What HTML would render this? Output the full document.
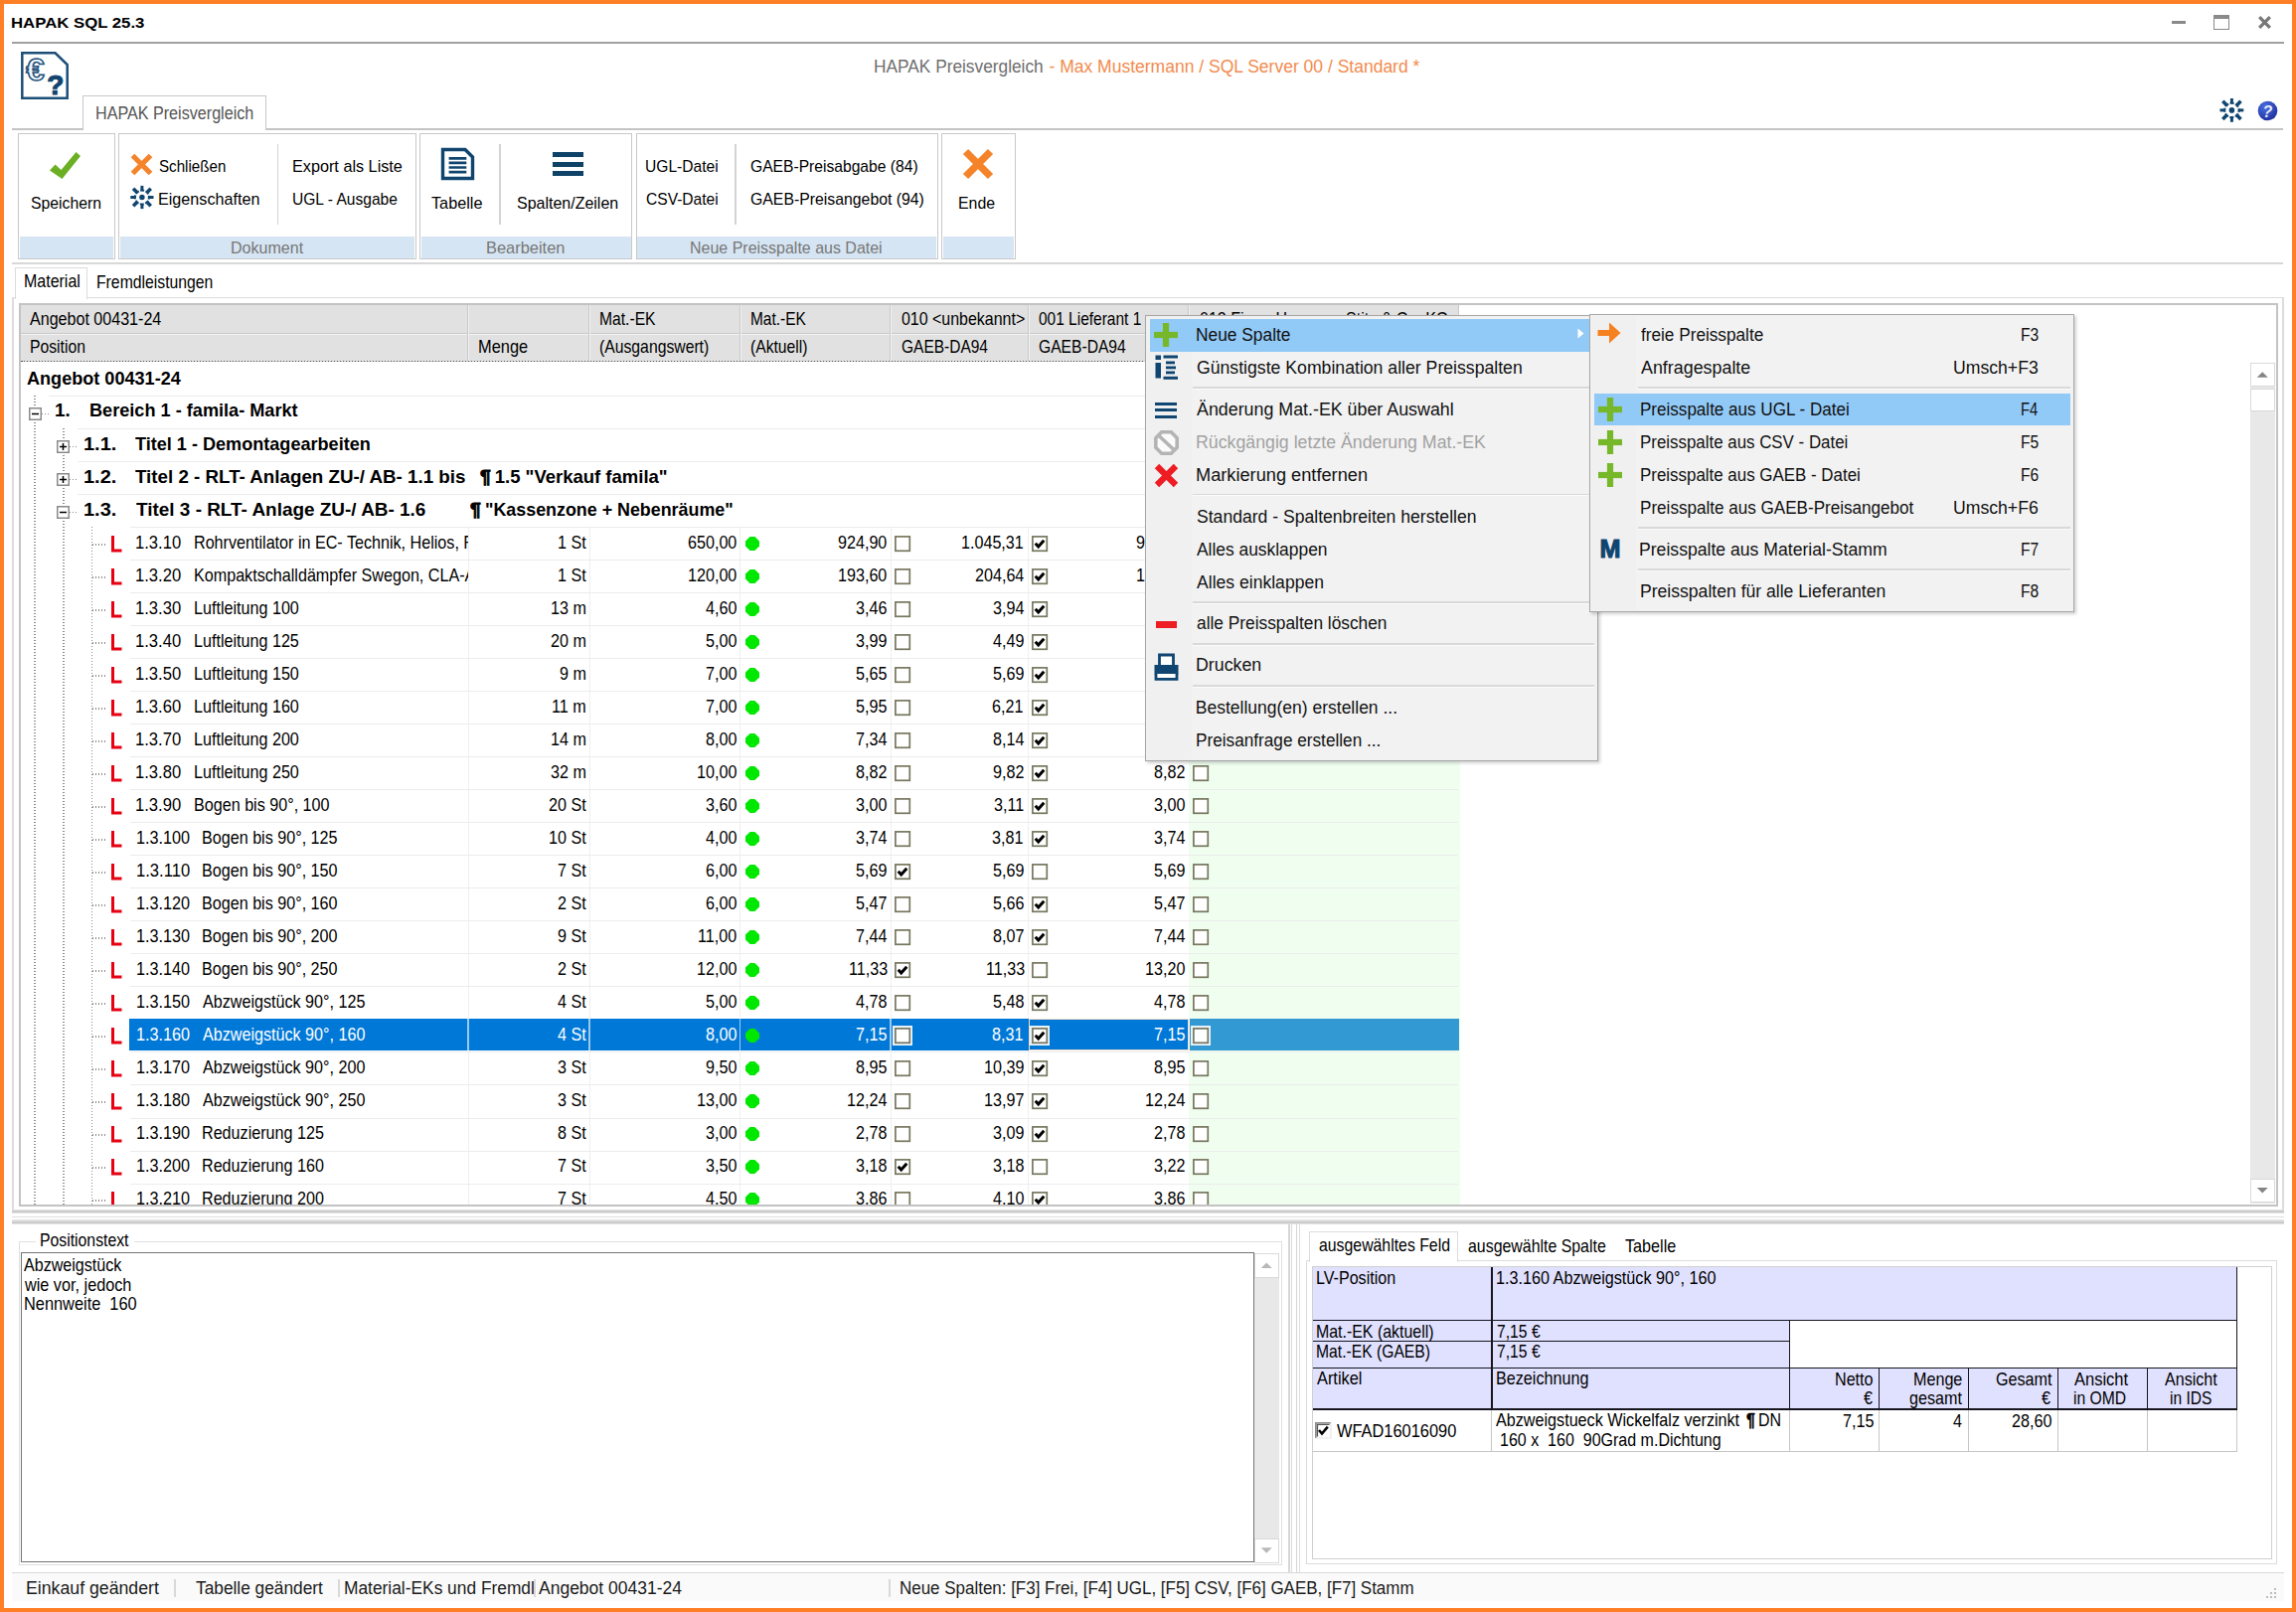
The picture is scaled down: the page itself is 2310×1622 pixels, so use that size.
<!DOCTYPE html>
<html lang="de"><head><meta charset="utf-8"><title>HAPAK SQL 25.3</title><style>
html,body{margin:0;padding:0;background:#fff;}
body{width:2310px;height:1622px;overflow:hidden;}
#app{position:relative;width:2310px;height:1622px;overflow:hidden;background:#ff7f27;font-family:"Liberation Sans",sans-serif;color:#000;}
#app div,#app span,#app svg{position:absolute;box-sizing:border-box;}
#app span{white-space:pre;transform-origin:0 0;}
#app svg{overflow:visible;}
#app svg text{font-family:"Liberation Sans",sans-serif;}
</style></head><body><div id="app">
<div style="left:4px;top:4px;width:2301.5px;height:1613.5px;background:#fff;"></div>
<span style="left:10.91px;top:15px;font-size:15.4px;line-height:15.4px;font-weight:bold;transform:scaleX(1.0887);">HAPAK SQL 25.3</span>
<div style="left:12px;top:41.5px;width:2285.5px;height:2px;background:#a0a0a0;"></div>
<div style="left:2185px;top:20.5px;width:14px;height:3.5px;background:#8a8a8a;"></div>
<div style="left:2227px;top:15px;width:16px;height:15px;background:#fff;border:1.6px solid #8a8a8a;border-top:4px solid #8a8a8a;"></div>
<svg style="left:2272px;top:16px;" width="13" height="13" viewBox="0 0 13 13"><path d="M1.2 1.2 L11.8 11.8 M11.8 1.2 L1.2 11.8" stroke="#777" stroke-width="3.2" fill="none"/></svg>
<svg style="left:20px;top:51px;" width="50" height="50" viewBox="0 0 50 50"><path d="M2.3 2.3 H35.5 L47.7 14 V47.7 H2.3 Z" fill="#fff" stroke="#1d4e78" stroke-width="2.5" stroke-linejoin="miter"/><text x="6.2" y="29.8" font-size="31" font-weight="bold" fill="#f1f8ff" stroke="#1d4e78" stroke-width="1.5" textLength="18.5" lengthAdjust="spacingAndGlyphs">€</text><text x="27.2" y="43.6" font-size="28" font-weight="bold" fill="#12446f" stroke="#12446f" stroke-width="1.1">?</text></svg>
<span style="left:879.01px;top:59px;font-size:17.5px;line-height:17.5px;color:#6e6e6e;transform:scaleX(0.9879);">HAPAK Preisvergleich</span>
<span style="left:1055.50px;top:59px;font-size:17.5px;line-height:17.5px;color:#f28b4e;">- Max Mustermann / SQL Server 00 / Standard *</span>
<div style="left:12px;top:129px;width:2285px;height:1.5px;background:#c4c4c4;"></div>
<div style="left:83px;top:96px;width:184.5px;height:35px;background:#fff;border:1.5px solid #c8c8c8;border-bottom:none;"></div>
<span style="left:95.60px;top:105px;font-size:18px;line-height:18px;color:#555;transform:scaleX(0.8963);">HAPAK Preisvergleich</span>
<svg style="left:2232px;top:98px;" width="26" height="26" viewBox="0 0 26 26"><circle cx="13.4" cy="12.9" r="2.80" fill="#0f4570"/><circle cx="13.4" cy="12.9" r="7.14" fill="none" stroke="#0f4570" stroke-width="2.02" stroke-dasharray="4.04 1.57" stroke-dashoffset="2.02"/><path d="M20.78 12.90 L25.30 12.90" stroke="#0f4570" stroke-width="3.00" fill="none"/><path d="M18.62 18.12 L22.49 21.99" stroke="#0f4570" stroke-width="3.54" fill="none"/><path d="M13.40 20.28 L13.40 24.80" stroke="#0f4570" stroke-width="3.00" fill="none"/><path d="M8.18 18.12 L4.31 21.99" stroke="#0f4570" stroke-width="3.54" fill="none"/><path d="M6.02 12.90 L1.50 12.90" stroke="#0f4570" stroke-width="3.00" fill="none"/><path d="M8.18 7.68 L4.31 3.81" stroke="#0f4570" stroke-width="3.54" fill="none"/><path d="M13.40 5.52 L13.40 1.00" stroke="#0f4570" stroke-width="3.00" fill="none"/><path d="M18.62 7.68 L22.49 3.81" stroke="#0f4570" stroke-width="3.54" fill="none"/></svg>
<svg style="left:2271px;top:100.5px;" width="21" height="21" viewBox="0 0 21 21"><defs><radialGradient id="hg" cx="0.38" cy="0.3" r="0.75"><stop offset="0" stop-color="#4a6fe0"/><stop offset="1" stop-color="#1d2f9e"/></radialGradient></defs><circle cx="10.5" cy="10.5" r="9.8" fill="url(#hg)"/><text x="10.5" y="16.5" font-size="16" font-weight="bold" font-style="italic" text-anchor="middle" fill="#e8ecf8">?</text></svg>
<div style="left:18px;top:134px;width:97.5px;height:127px;background:#fff;border:1.5px solid #c9c9c9;"></div>
<div style="left:19.5px;top:237.5px;width:94.5px;height:22px;background:#d6e5f3;"></div>
<div style="left:119px;top:134px;width:299.5px;height:127px;background:#fff;border:1.5px solid #c9c9c9;"></div>
<div style="left:120.5px;top:237.5px;width:296.5px;height:22px;background:#d6e5f3;"></div>
<span style="left:232.06px;top:241px;font-size:17px;line-height:17px;color:#777;transform:scaleX(0.9445);">Dokument</span>
<div style="left:422px;top:134px;width:214px;height:127px;background:#fff;border:1.5px solid #c9c9c9;"></div>
<div style="left:423.5px;top:237.5px;width:211px;height:22px;background:#d6e5f3;"></div>
<span style="left:488.53px;top:241px;font-size:17px;line-height:17px;color:#777;transform:scaleX(0.9657);">Bearbeiten</span>
<div style="left:639.5px;top:134px;width:304px;height:127px;background:#fff;border:1.5px solid #c9c9c9;"></div>
<div style="left:641px;top:237.5px;width:301px;height:22px;background:#d6e5f3;"></div>
<span style="left:694.06px;top:241px;font-size:17px;line-height:17px;color:#777;transform:scaleX(0.9401);">Neue Preisspalte aus Datei</span>
<div style="left:947px;top:134px;width:74.5px;height:127px;background:#fff;border:1.5px solid #c9c9c9;"></div>
<div style="left:948.5px;top:237.5px;width:71.5px;height:22px;background:#d6e5f3;"></div>
<div style="left:278.75px;top:144.5px;width:1.5px;height:81.5px;background:#d4d4d4;"></div>
<div style="left:502.25px;top:144.5px;width:1.5px;height:81.5px;background:#d4d4d4;"></div>
<div style="left:739.25px;top:144.5px;width:1.5px;height:81.5px;background:#d4d4d4;"></div>
<svg style="left:49px;top:152px;" width="33" height="29" viewBox="0 0 33 29"><path d="M1 19.5 L6.5 13.5 L12.5 19 L27.5 1 L32 5 L13.5 28 Z" fill="#6bb024"/></svg>
<span style="left:30.50px;top:196px;font-size:17px;line-height:17px;transform:scaleX(0.9265);">Speichern</span>
<svg style="left:131px;top:153.5px;" width="23" height="23" viewBox="0 0 23 23"><path d="M2.5 2.5 L20.5 20.5 M20.5 2.5 L2.5 20.5" stroke="#f5832a" stroke-width="5.2" fill="none"/></svg>
<span style="left:160.00px;top:159px;font-size:17px;line-height:17px;transform:scaleX(0.8917);">Schließen</span>
<svg style="left:129.5px;top:185.5px;" width="25" height="25" viewBox="0 0 25 25"><circle cx="12.9" cy="12.5" r="2.73" fill="#0f4570"/><circle cx="12.9" cy="12.5" r="6.96" fill="none" stroke="#0f4570" stroke-width="1.97" stroke-dasharray="3.94 1.53" stroke-dashoffset="1.97"/><path d="M20.09 12.50 L24.50 12.50" stroke="#0f4570" stroke-width="3.00" fill="none"/><path d="M17.99 17.59 L21.76 21.36" stroke="#0f4570" stroke-width="3.54" fill="none"/><path d="M12.90 19.69 L12.90 24.10" stroke="#0f4570" stroke-width="3.00" fill="none"/><path d="M7.81 17.59 L4.04 21.36" stroke="#0f4570" stroke-width="3.54" fill="none"/><path d="M5.71 12.50 L1.30 12.50" stroke="#0f4570" stroke-width="3.00" fill="none"/><path d="M7.81 7.41 L4.04 3.64" stroke="#0f4570" stroke-width="3.54" fill="none"/><path d="M12.90 5.31 L12.90 0.90" stroke="#0f4570" stroke-width="3.00" fill="none"/><path d="M17.99 7.41 L21.76 3.64" stroke="#0f4570" stroke-width="3.54" fill="none"/></svg>
<span style="left:159.05px;top:192px;font-size:17px;line-height:17px;transform:scaleX(0.9502);">Eigenschaften</span>
<span style="left:293.55px;top:159px;font-size:17px;line-height:17px;transform:scaleX(0.9541);">Export als Liste</span>
<span style="left:293.58px;top:192px;font-size:17px;line-height:17px;transform:scaleX(0.9160);">UGL - Ausgabe</span>
<svg style="left:443px;top:148px;" width="35" height="34" viewBox="0 0 35 34"><path d="M2.5 2.5 H25 L32.5 10 V31.5 H2.5 Z" fill="#fff" stroke="#10456f" stroke-width="3.4"/><path d="M8.6 11.3 H26.3 M8.6 15.9 H26.3 M8.6 20.5 H26.3 M8.6 25.1 H26.3" stroke="#10456f" stroke-width="2.7"/></svg>
<span style="left:434.00px;top:196px;font-size:17px;line-height:17px;transform:scaleX(0.9547);">Tabelle</span>
<div style="left:556px;top:153px;width:31px;height:5px;background:#0e4267;"></div>
<div style="left:556px;top:162.5px;width:31px;height:5px;background:#0e4267;"></div>
<div style="left:556px;top:171.8px;width:31px;height:5px;background:#0e4267;"></div>
<span style="left:520.00px;top:196px;font-size:17px;line-height:17px;transform:scaleX(0.9401);">Spalten/Zeilen</span>
<span style="left:649.08px;top:159px;font-size:17px;line-height:17px;transform:scaleX(0.9169);">UGL-Datei</span>
<span style="left:650.00px;top:192px;font-size:17px;line-height:17px;transform:scaleX(0.9162);">CSV-Datei</span>
<span style="left:755.00px;top:159px;font-size:17px;line-height:17px;transform:scaleX(0.9198);">GAEB-Preisabgabe (84)</span>
<span style="left:755.00px;top:192px;font-size:17px;line-height:17px;transform:scaleX(0.9299);">GAEB-Preisangebot (94)</span>
<svg style="left:968px;top:149px;" width="32" height="32" viewBox="0 0 32 32"><path d="M3.5 3.5 L28.5 28.5 M28.5 3.5 L3.5 28.5" stroke="#f5832a" stroke-width="7.4" fill="none"/></svg>
<span style="left:964.07px;top:196px;font-size:17px;line-height:17px;transform:scaleX(0.9347);">Ende</span>
<div style="left:12px;top:264px;width:2285px;height:1.5px;background:#d8d8d8;"></div>
<div style="left:12px;top:298.5px;width:2285px;height:1.5px;background:#dcdcdc;"></div>
<div style="left:12px;top:298.5px;width:1.5px;height:919.5px;background:#dcdcdc;"></div>
<div style="left:2296px;top:298.5px;width:1.5px;height:919.5px;background:#dcdcdc;"></div>
<div style="left:15px;top:269px;width:73px;height:31.5px;background:#fff;border:1.5px solid #dcdcdc;border-bottom:none;"></div>
<span style="left:24.14px;top:274px;font-size:18.5px;line-height:18.5px;transform:scaleX(0.8636);">Material</span>
<span style="left:96.65px;top:275px;font-size:18.5px;line-height:18.5px;transform:scaleX(0.8516);">Fremdleistungen</span>
<div style="left:19px;top:305px;width:2272.5px;height:908.5px;background:#fff;border:2px solid #c3c3c3;"></div>
<div style="left:21px;top:307px;width:1446.5px;height:56.5px;background:#e1e1e1;"></div>
<div style="left:21px;top:334.5px;width:1446.5px;height:1px;background:#c9c9c9;"></div>
<div style="left:21px;top:335.5px;width:1446.5px;height:1px;background:#f4f4f4;"></div>
<div style="left:470px;top:307px;width:1px;height:56.5px;background:#c9c9c9;"></div>
<div style="left:471px;top:307px;width:1px;height:56.5px;background:#f1f1f1;"></div>
<div style="left:592px;top:307px;width:1px;height:56.5px;background:#c9c9c9;"></div>
<div style="left:593px;top:307px;width:1px;height:56.5px;background:#f1f1f1;"></div>
<div style="left:743.5px;top:307px;width:1px;height:56.5px;background:#c9c9c9;"></div>
<div style="left:744.5px;top:307px;width:1px;height:56.5px;background:#f1f1f1;"></div>
<div style="left:895px;top:307px;width:1px;height:56.5px;background:#c9c9c9;"></div>
<div style="left:896px;top:307px;width:1px;height:56.5px;background:#f1f1f1;"></div>
<div style="left:1033.5px;top:307px;width:1px;height:56.5px;background:#c9c9c9;"></div>
<div style="left:1034.5px;top:307px;width:1px;height:56.5px;background:#f1f1f1;"></div>
<div style="left:1195px;top:307px;width:1px;height:56.5px;background:#c9c9c9;"></div>
<div style="left:1196px;top:307px;width:1px;height:56.5px;background:#f1f1f1;"></div>
<div style="left:1466.5px;top:307px;width:1px;height:56.5px;background:#c9c9c9;"></div>
<div style="left:21px;top:363px;width:1446.5px;height:1.2px;background:repeating-linear-gradient(90deg,#555 0 1.5px,#cfcfcf 1.5px 3px);"></div>
<span style="left:30.00px;top:312px;font-size:18.5px;line-height:18.5px;transform:scaleX(0.8687);">Angebot 00431-24</span>
<span style="left:30.15px;top:340px;font-size:18.5px;line-height:18.5px;transform:scaleX(0.8493);">Position</span>
<span style="left:481.11px;top:340px;font-size:18.5px;line-height:18.5px;transform:scaleX(0.8864);">Menge</span>
<span style="left:602.90px;top:312px;font-size:18.5px;line-height:18.5px;transform:scaleX(0.8461);">Mat.-EK</span>
<span style="left:602.90px;top:340px;font-size:18.5px;line-height:18.5px;transform:scaleX(0.8509);">(Ausgangswert)</span>
<span style="left:754.67px;top:312px;font-size:18.5px;line-height:18.5px;transform:scaleX(0.8348);">Mat.-EK</span>
<span style="left:754.65px;top:340px;font-size:18.5px;line-height:18.5px;transform:scaleX(0.8472);">(Aktuell)</span>
<span style="left:907.00px;top:312px;font-size:18.5px;line-height:18.5px;transform:scaleX(0.8623);">010 &lt;unbekannt&gt;</span>
<span style="left:907.00px;top:340px;font-size:18.5px;line-height:18.5px;transform:scaleX(0.8377);">GAEB-DA94</span>
<span style="left:1045.00px;top:312px;font-size:18.5px;line-height:18.5px;transform:scaleX(0.8364);">001 Lieferant 1</span>
<span style="left:1045.00px;top:340px;font-size:18.5px;line-height:18.5px;transform:scaleX(0.8449);">GAEB-DA94</span>
<span style="left:1206.70px;top:312px;font-size:18.5px;line-height:18.5px;transform:scaleX(0.8665);">012 Firma Hermann Stitz &amp; Co. KG</span>
<span style="left:1206.70px;top:340px;font-size:18.5px;line-height:18.5px;transform:scaleX(0.8449);">GAEB-DA94</span>
<div style="left:1195.5px;top:364px;width:273px;height:848px;background:#effeef;"></div>
<div style="left:2264px;top:364.5px;width:24.5px;height:846px;background:#e8e8e8;"></div>
<div style="left:2264px;top:365px;width:24.5px;height:24px;background:#fff;border:1.5px solid #d9d9d9;"></div>
<svg style="left:0;top:0" width="2310" height="1622"><polygon points="2270.75,379.7 2281.75,379.7 2276.25,374.2" fill="#858585"/></svg>
<div style="left:2264px;top:391px;width:24.5px;height:23px;background:#fff;border:1.5px solid #d9d9d9;"></div>
<div style="left:2264px;top:1185.5px;width:24.5px;height:24.5px;background:#fff;border:1.5px solid #d9d9d9;"></div>
<svg style="left:0;top:0" width="2310" height="1622"><polygon points="2270.75,1195.05 2281.75,1195.05 2276.25,1200.55" fill="#858585"/></svg>
<div style="left:470.5px;top:530px;width:1px;height:681.5px;background:#efefef;"></div>
<div style="left:592.5px;top:530px;width:1px;height:681.5px;background:#efefef;"></div>
<div style="left:744px;top:530px;width:1px;height:681.5px;background:#efefef;"></div>
<div style="left:895.5px;top:530px;width:1px;height:681.5px;background:#efefef;"></div>
<div style="left:1034px;top:530px;width:1px;height:681.5px;background:#efefef;"></div>
<div style="left:34.25px;top:398px;width:1.5px;height:813.5px;background:repeating-linear-gradient(180deg,#8c8c8c 0 1.5px,transparent 1.5px 3px);"></div>
<div style="left:63px;top:431px;width:1.5px;height:780.5px;background:repeating-linear-gradient(180deg,#8c8c8c 0 1.5px,transparent 1.5px 3px);"></div>
<div style="left:91.75px;top:530px;width:1.5px;height:681.5px;background:repeating-linear-gradient(180deg,#8c8c8c 0 1.5px,transparent 1.5px 3px);"></div>
<span style="left:27.00px;top:372px;font-size:18.5px;line-height:18.5px;font-weight:bold;transform:scaleX(0.9777);">Angebot 00431-24</span>
<div style="left:49px;top:398px;width:1418px;height:1px;background:#ececec;"></div>
<svg style="left:28.5px;top:410px;" width="13" height="13" viewBox="0 0 13 13"><rect x="0.75" y="0.75" width="11.5" height="11.5" fill="#fff" stroke="#8a8a8a" stroke-width="1.5"/><path d="M3 6.5 H10" stroke="#000" stroke-width="1.5"/></svg>
<div style="left:41.5px;top:415.75px;width:7.5px;height:1.5px;background:repeating-linear-gradient(90deg,#8c8c8c 0 1.5px,transparent 1.5px 3px);"></div>
<span style="left:55.23px;top:404px;font-size:18.5px;line-height:18.5px;font-weight:bold;transform:scaleX(1.0159);">1.</span>
<span style="left:89.52px;top:404px;font-size:18.5px;line-height:18.5px;font-weight:bold;transform:scaleX(0.9803);">Bereich 1 - famila- Markt</span>
<div style="left:77.5px;top:431px;width:1389.5px;height:1px;background:#ececec;"></div>
<svg style="left:57px;top:443px;" width="13" height="13" viewBox="0 0 13 13"><rect x="0.75" y="0.75" width="11.5" height="11.5" fill="#fff" stroke="#8a8a8a" stroke-width="1.5"/><path d="M3 6.5 H10" stroke="#000" stroke-width="1.5"/><path d="M6.5 3 V10" stroke="#000" stroke-width="1.5"/></svg>
<div style="left:70px;top:448.75px;width:7.5px;height:1.5px;background:repeating-linear-gradient(90deg,#8c8c8c 0 1.5px,transparent 1.5px 3px);"></div>
<span style="left:83.92px;top:438px;font-size:18.5px;line-height:18.5px;font-weight:bold;transform:scaleX(1.0795);">1.1.</span>
<span style="left:136.00px;top:438px;font-size:18.5px;line-height:18.5px;font-weight:bold;transform:scaleX(0.9774);">Titel 1 - Demontagearbeiten</span>
<div style="left:77.5px;top:464px;width:1389.5px;height:1px;background:#ececec;"></div>
<svg style="left:57px;top:476px;" width="13" height="13" viewBox="0 0 13 13"><rect x="0.75" y="0.75" width="11.5" height="11.5" fill="#fff" stroke="#8a8a8a" stroke-width="1.5"/><path d="M3 6.5 H10" stroke="#000" stroke-width="1.5"/><path d="M6.5 3 V10" stroke="#000" stroke-width="1.5"/></svg>
<div style="left:70px;top:481.75px;width:7.5px;height:1.5px;background:repeating-linear-gradient(90deg,#8c8c8c 0 1.5px,transparent 1.5px 3px);"></div>
<span style="left:83.92px;top:471px;font-size:18.5px;line-height:18.5px;font-weight:bold;transform:scaleX(1.0795);">1.2.</span>
<div style="left:77.5px;top:497px;width:1389.5px;height:1px;background:#ececec;"></div>
<svg style="left:57px;top:509px;" width="13" height="13" viewBox="0 0 13 13"><rect x="0.75" y="0.75" width="11.5" height="11.5" fill="#fff" stroke="#8a8a8a" stroke-width="1.5"/><path d="M3 6.5 H10" stroke="#000" stroke-width="1.5"/></svg>
<div style="left:70px;top:514.75px;width:7.5px;height:1.5px;background:repeating-linear-gradient(90deg,#8c8c8c 0 1.5px,transparent 1.5px 3px);"></div>
<span style="left:83.92px;top:504px;font-size:18.5px;line-height:18.5px;font-weight:bold;transform:scaleX(1.0795);">1.3.</span>
<span style="left:136.00px;top:471px;font-size:18.5px;line-height:18.5px;font-weight:bold;transform:scaleX(1.0138);">Titel 2 - RLT- Anlagen ZU-/ AB- 1.1 bis</span>
<span style="left:482.50px;top:471px;font-size:18.5px;line-height:18.5px;font-weight:bold;transform:scaleX(1.0500);-webkit-text-stroke:0.9px #000;">¶</span>
<span style="left:497.75px;top:471px;font-size:18.5px;line-height:18.5px;font-weight:bold;">1.5 &quot;Verkauf famila&quot;</span>
<span style="left:137.00px;top:504px;font-size:18.5px;line-height:18.5px;font-weight:bold;transform:scaleX(1.0234);">Titel 3 - RLT- Anlage ZU-/ AB- 1.6</span>
<span style="left:472.50px;top:504px;font-size:18.5px;line-height:18.5px;font-weight:bold;transform:scaleX(1.0500);-webkit-text-stroke:0.9px #000;">¶</span>
<span style="left:488.03px;top:504px;font-size:18.5px;line-height:18.5px;font-weight:bold;transform:scaleX(0.9654);">&quot;Kassenzone + Nebenräume&quot;</span>
<div style="left:0;top:0;width:2310px;height:1211.5px;overflow:hidden;">
<div style="left:130.5px;top:530px;width:1336.5px;height:1px;background:#ececec;"></div>
<div style="left:93px;top:547.25px;width:13px;height:1.5px;background:repeating-linear-gradient(90deg,#8c8c8c 0 1.5px,transparent 1.5px 3px);"></div>
<svg style="left:112px;top:539px;" width="11" height="17" viewBox="0 0 11 17"><path d="M1.5 0 V15 H10.5" stroke="#e60012" stroke-width="3" fill="none"/></svg>
<span style="left:136.10px;top:537px;font-size:18.5px;line-height:18.5px;transform:scaleX(0.8974);">1.3.10</span>
<div style="left:193.5px;top:532px;width:277px;height:30px;overflow:hidden;">
<span style="left:1.13px;top:5px;font-size:18.5px;line-height:18.5px;transform:scaleX(0.8720);">Rohrventilator in EC- Technik, Helios, RR</span>
</div>
<span style="left:560.93px;top:537px;font-size:18.5px;line-height:18.5px;transform:scaleX(0.8720);">1 St</span>
<span style="left:691.91px;top:537px;font-size:18.5px;line-height:18.5px;transform:scaleX(0.8720);">650,00</span>
<svg style="left:750px;top:540px;" width="14" height="14" viewBox="0 0 14 14"><polygon points="4.6,0 9.4,0 14,4.6 14,9.4 9.4,14 4.6,14 0,9.4 0,4.6" fill="#00e800"/></svg>
<span style="left:843.41px;top:537px;font-size:18.5px;line-height:18.5px;transform:scaleX(0.8720);">924,90</span>
<svg style="left:900px;top:539px;" width="16.2" height="16.2" viewBox="0 0 16.2 16.2"><rect x="0.9" y="0.9" width="14.4" height="14.4" fill="#fff" stroke="#77775f" stroke-width="1.7"/></svg>
<span style="left:966.96px;top:537px;font-size:18.5px;line-height:18.5px;transform:scaleX(0.8720);">1.045,31</span>
<svg style="left:1038px;top:539px;" width="16.2" height="16.2" viewBox="0 0 16.2 16.2"><rect x="0.9" y="0.9" width="14.4" height="14.4" fill="#fff" stroke="#77775f" stroke-width="1.7"/><path d="M3.7 7.8 L6.7 11 L12.3 4.7" stroke="#000" stroke-width="3" fill="none"/></svg>
<span style="left:1143.41px;top:537px;font-size:18.5px;line-height:18.5px;transform:scaleX(0.8720);">924,90</span>
<svg style="left:1200px;top:539px;" width="16.2" height="16.2" viewBox="0 0 16.2 16.2"><rect x="0.9" y="0.9" width="14.4" height="14.4" fill="#fff" stroke="#77775f" stroke-width="1.7"/></svg>
<div style="left:130.5px;top:563px;width:1336.5px;height:1px;background:#ececec;"></div>
<div style="left:93px;top:580.25px;width:13px;height:1.5px;background:repeating-linear-gradient(90deg,#8c8c8c 0 1.5px,transparent 1.5px 3px);"></div>
<svg style="left:112px;top:572px;" width="11" height="17" viewBox="0 0 11 17"><path d="M1.5 0 V15 H10.5" stroke="#e60012" stroke-width="3" fill="none"/></svg>
<span style="left:136.10px;top:570px;font-size:18.5px;line-height:18.5px;transform:scaleX(0.8974);">1.3.20</span>
<div style="left:193.5px;top:565px;width:277px;height:30px;overflow:hidden;">
<span style="left:1.13px;top:5px;font-size:18.5px;line-height:18.5px;transform:scaleX(0.8720);">Kompaktschalldämpfer Swegon, CLA-A</span>
</div>
<span style="left:560.93px;top:570px;font-size:18.5px;line-height:18.5px;transform:scaleX(0.8720);">1 St</span>
<span style="left:691.91px;top:570px;font-size:18.5px;line-height:18.5px;transform:scaleX(0.8720);">120,00</span>
<svg style="left:750px;top:573px;" width="14" height="14" viewBox="0 0 14 14"><polygon points="4.6,0 9.4,0 14,4.6 14,9.4 9.4,14 4.6,14 0,9.4 0,4.6" fill="#00e800"/></svg>
<span style="left:843.41px;top:570px;font-size:18.5px;line-height:18.5px;transform:scaleX(0.8720);">193,60</span>
<svg style="left:900px;top:572px;" width="16.2" height="16.2" viewBox="0 0 16.2 16.2"><rect x="0.9" y="0.9" width="14.4" height="14.4" fill="#fff" stroke="#77775f" stroke-width="1.7"/></svg>
<span style="left:981.41px;top:570px;font-size:18.5px;line-height:18.5px;transform:scaleX(0.8720);">204,64</span>
<svg style="left:1038px;top:572px;" width="16.2" height="16.2" viewBox="0 0 16.2 16.2"><rect x="0.9" y="0.9" width="14.4" height="14.4" fill="#fff" stroke="#77775f" stroke-width="1.7"/><path d="M3.7 7.8 L6.7 11 L12.3 4.7" stroke="#000" stroke-width="3" fill="none"/></svg>
<span style="left:1143.41px;top:570px;font-size:18.5px;line-height:18.5px;transform:scaleX(0.8720);">193,60</span>
<svg style="left:1200px;top:572px;" width="16.2" height="16.2" viewBox="0 0 16.2 16.2"><rect x="0.9" y="0.9" width="14.4" height="14.4" fill="#fff" stroke="#77775f" stroke-width="1.7"/></svg>
<div style="left:130.5px;top:596px;width:1336.5px;height:1px;background:#ececec;"></div>
<div style="left:93px;top:613.25px;width:13px;height:1.5px;background:repeating-linear-gradient(90deg,#8c8c8c 0 1.5px,transparent 1.5px 3px);"></div>
<svg style="left:112px;top:605px;" width="11" height="17" viewBox="0 0 11 17"><path d="M1.5 0 V15 H10.5" stroke="#e60012" stroke-width="3" fill="none"/></svg>
<span style="left:136.10px;top:603px;font-size:18.5px;line-height:18.5px;transform:scaleX(0.8974);">1.3.30</span>
<div style="left:193.5px;top:598px;width:277px;height:30px;overflow:hidden;">
<span style="left:1.13px;top:5px;font-size:18.5px;line-height:18.5px;transform:scaleX(0.8720);">Luftleitung 100</span>
</div>
<span style="left:553.99px;top:603px;font-size:18.5px;line-height:18.5px;transform:scaleX(0.8720);">13 m</span>
<span style="left:709.85px;top:603px;font-size:18.5px;line-height:18.5px;transform:scaleX(0.8720);">4,60</span>
<svg style="left:750px;top:606px;" width="14" height="14" viewBox="0 0 14 14"><polygon points="4.6,0 9.4,0 14,4.6 14,9.4 9.4,14 4.6,14 0,9.4 0,4.6" fill="#00e800"/></svg>
<span style="left:861.35px;top:603px;font-size:18.5px;line-height:18.5px;transform:scaleX(0.8720);">3,46</span>
<svg style="left:900px;top:605px;" width="16.2" height="16.2" viewBox="0 0 16.2 16.2"><rect x="0.9" y="0.9" width="14.4" height="14.4" fill="#fff" stroke="#77775f" stroke-width="1.7"/></svg>
<span style="left:999.35px;top:603px;font-size:18.5px;line-height:18.5px;transform:scaleX(0.8720);">3,94</span>
<svg style="left:1038px;top:605px;" width="16.2" height="16.2" viewBox="0 0 16.2 16.2"><rect x="0.9" y="0.9" width="14.4" height="14.4" fill="#fff" stroke="#77775f" stroke-width="1.7"/><path d="M3.7 7.8 L6.7 11 L12.3 4.7" stroke="#000" stroke-width="3" fill="none"/></svg>
<span style="left:1161.35px;top:603px;font-size:18.5px;line-height:18.5px;transform:scaleX(0.8720);">3,46</span>
<svg style="left:1200px;top:605px;" width="16.2" height="16.2" viewBox="0 0 16.2 16.2"><rect x="0.9" y="0.9" width="14.4" height="14.4" fill="#fff" stroke="#77775f" stroke-width="1.7"/></svg>
<div style="left:130.5px;top:629px;width:1336.5px;height:1px;background:#ececec;"></div>
<div style="left:93px;top:646.25px;width:13px;height:1.5px;background:repeating-linear-gradient(90deg,#8c8c8c 0 1.5px,transparent 1.5px 3px);"></div>
<svg style="left:112px;top:638px;" width="11" height="17" viewBox="0 0 11 17"><path d="M1.5 0 V15 H10.5" stroke="#e60012" stroke-width="3" fill="none"/></svg>
<span style="left:136.10px;top:636px;font-size:18.5px;line-height:18.5px;transform:scaleX(0.8974);">1.3.40</span>
<div style="left:193.5px;top:631px;width:277px;height:30px;overflow:hidden;">
<span style="left:1.13px;top:5px;font-size:18.5px;line-height:18.5px;transform:scaleX(0.8720);">Luftleitung 125</span>
</div>
<span style="left:553.99px;top:636px;font-size:18.5px;line-height:18.5px;transform:scaleX(0.8720);">20 m</span>
<span style="left:709.85px;top:636px;font-size:18.5px;line-height:18.5px;transform:scaleX(0.8720);">5,00</span>
<svg style="left:750px;top:639px;" width="14" height="14" viewBox="0 0 14 14"><polygon points="4.6,0 9.4,0 14,4.6 14,9.4 9.4,14 4.6,14 0,9.4 0,4.6" fill="#00e800"/></svg>
<span style="left:861.35px;top:636px;font-size:18.5px;line-height:18.5px;transform:scaleX(0.8720);">3,99</span>
<svg style="left:900px;top:638px;" width="16.2" height="16.2" viewBox="0 0 16.2 16.2"><rect x="0.9" y="0.9" width="14.4" height="14.4" fill="#fff" stroke="#77775f" stroke-width="1.7"/></svg>
<span style="left:999.35px;top:636px;font-size:18.5px;line-height:18.5px;transform:scaleX(0.8720);">4,49</span>
<svg style="left:1038px;top:638px;" width="16.2" height="16.2" viewBox="0 0 16.2 16.2"><rect x="0.9" y="0.9" width="14.4" height="14.4" fill="#fff" stroke="#77775f" stroke-width="1.7"/><path d="M3.7 7.8 L6.7 11 L12.3 4.7" stroke="#000" stroke-width="3" fill="none"/></svg>
<span style="left:1161.35px;top:636px;font-size:18.5px;line-height:18.5px;transform:scaleX(0.8720);">3,99</span>
<svg style="left:1200px;top:638px;" width="16.2" height="16.2" viewBox="0 0 16.2 16.2"><rect x="0.9" y="0.9" width="14.4" height="14.4" fill="#fff" stroke="#77775f" stroke-width="1.7"/></svg>
<div style="left:130.5px;top:662px;width:1336.5px;height:1px;background:#ececec;"></div>
<div style="left:93px;top:679.25px;width:13px;height:1.5px;background:repeating-linear-gradient(90deg,#8c8c8c 0 1.5px,transparent 1.5px 3px);"></div>
<svg style="left:112px;top:671px;" width="11" height="17" viewBox="0 0 11 17"><path d="M1.5 0 V15 H10.5" stroke="#e60012" stroke-width="3" fill="none"/></svg>
<span style="left:136.10px;top:669px;font-size:18.5px;line-height:18.5px;transform:scaleX(0.8974);">1.3.50</span>
<div style="left:193.5px;top:664px;width:277px;height:30px;overflow:hidden;">
<span style="left:1.13px;top:5px;font-size:18.5px;line-height:18.5px;transform:scaleX(0.8720);">Luftleitung 150</span>
</div>
<span style="left:562.97px;top:669px;font-size:18.5px;line-height:18.5px;transform:scaleX(0.8720);">9 m</span>
<span style="left:709.85px;top:669px;font-size:18.5px;line-height:18.5px;transform:scaleX(0.8720);">7,00</span>
<svg style="left:750px;top:672px;" width="14" height="14" viewBox="0 0 14 14"><polygon points="4.6,0 9.4,0 14,4.6 14,9.4 9.4,14 4.6,14 0,9.4 0,4.6" fill="#00e800"/></svg>
<span style="left:861.35px;top:669px;font-size:18.5px;line-height:18.5px;transform:scaleX(0.8720);">5,65</span>
<svg style="left:900px;top:671px;" width="16.2" height="16.2" viewBox="0 0 16.2 16.2"><rect x="0.9" y="0.9" width="14.4" height="14.4" fill="#fff" stroke="#77775f" stroke-width="1.7"/></svg>
<span style="left:999.35px;top:669px;font-size:18.5px;line-height:18.5px;transform:scaleX(0.8720);">5,69</span>
<svg style="left:1038px;top:671px;" width="16.2" height="16.2" viewBox="0 0 16.2 16.2"><rect x="0.9" y="0.9" width="14.4" height="14.4" fill="#fff" stroke="#77775f" stroke-width="1.7"/><path d="M3.7 7.8 L6.7 11 L12.3 4.7" stroke="#000" stroke-width="3" fill="none"/></svg>
<span style="left:1161.35px;top:669px;font-size:18.5px;line-height:18.5px;transform:scaleX(0.8720);">5,65</span>
<svg style="left:1200px;top:671px;" width="16.2" height="16.2" viewBox="0 0 16.2 16.2"><rect x="0.9" y="0.9" width="14.4" height="14.4" fill="#fff" stroke="#77775f" stroke-width="1.7"/></svg>
<div style="left:130.5px;top:695px;width:1336.5px;height:1px;background:#ececec;"></div>
<div style="left:93px;top:712.25px;width:13px;height:1.5px;background:repeating-linear-gradient(90deg,#8c8c8c 0 1.5px,transparent 1.5px 3px);"></div>
<svg style="left:112px;top:704px;" width="11" height="17" viewBox="0 0 11 17"><path d="M1.5 0 V15 H10.5" stroke="#e60012" stroke-width="3" fill="none"/></svg>
<span style="left:136.10px;top:702px;font-size:18.5px;line-height:18.5px;transform:scaleX(0.8974);">1.3.60</span>
<div style="left:193.5px;top:697px;width:277px;height:30px;overflow:hidden;">
<span style="left:1.13px;top:5px;font-size:18.5px;line-height:18.5px;transform:scaleX(0.8720);">Luftleitung 160</span>
</div>
<span style="left:555.19px;top:702px;font-size:18.5px;line-height:18.5px;transform:scaleX(0.8720);">11 m</span>
<span style="left:709.85px;top:702px;font-size:18.5px;line-height:18.5px;transform:scaleX(0.8720);">7,00</span>
<svg style="left:750px;top:705px;" width="14" height="14" viewBox="0 0 14 14"><polygon points="4.6,0 9.4,0 14,4.6 14,9.4 9.4,14 4.6,14 0,9.4 0,4.6" fill="#00e800"/></svg>
<span style="left:861.35px;top:702px;font-size:18.5px;line-height:18.5px;transform:scaleX(0.8720);">5,95</span>
<svg style="left:900px;top:704px;" width="16.2" height="16.2" viewBox="0 0 16.2 16.2"><rect x="0.9" y="0.9" width="14.4" height="14.4" fill="#fff" stroke="#77775f" stroke-width="1.7"/></svg>
<span style="left:998.35px;top:702px;font-size:18.5px;line-height:18.5px;transform:scaleX(0.8720);">6,21</span>
<svg style="left:1038px;top:704px;" width="16.2" height="16.2" viewBox="0 0 16.2 16.2"><rect x="0.9" y="0.9" width="14.4" height="14.4" fill="#fff" stroke="#77775f" stroke-width="1.7"/><path d="M3.7 7.8 L6.7 11 L12.3 4.7" stroke="#000" stroke-width="3" fill="none"/></svg>
<span style="left:1161.35px;top:702px;font-size:18.5px;line-height:18.5px;transform:scaleX(0.8720);">5,95</span>
<svg style="left:1200px;top:704px;" width="16.2" height="16.2" viewBox="0 0 16.2 16.2"><rect x="0.9" y="0.9" width="14.4" height="14.4" fill="#fff" stroke="#77775f" stroke-width="1.7"/></svg>
<div style="left:130.5px;top:728px;width:1336.5px;height:1px;background:#ececec;"></div>
<div style="left:93px;top:745.25px;width:13px;height:1.5px;background:repeating-linear-gradient(90deg,#8c8c8c 0 1.5px,transparent 1.5px 3px);"></div>
<svg style="left:112px;top:737px;" width="11" height="17" viewBox="0 0 11 17"><path d="M1.5 0 V15 H10.5" stroke="#e60012" stroke-width="3" fill="none"/></svg>
<span style="left:136.10px;top:735px;font-size:18.5px;line-height:18.5px;transform:scaleX(0.8974);">1.3.70</span>
<div style="left:193.5px;top:730px;width:277px;height:30px;overflow:hidden;">
<span style="left:1.13px;top:5px;font-size:18.5px;line-height:18.5px;transform:scaleX(0.8720);">Luftleitung 200</span>
</div>
<span style="left:553.99px;top:735px;font-size:18.5px;line-height:18.5px;transform:scaleX(0.8720);">14 m</span>
<span style="left:709.85px;top:735px;font-size:18.5px;line-height:18.5px;transform:scaleX(0.8720);">8,00</span>
<svg style="left:750px;top:738px;" width="14" height="14" viewBox="0 0 14 14"><polygon points="4.6,0 9.4,0 14,4.6 14,9.4 9.4,14 4.6,14 0,9.4 0,4.6" fill="#00e800"/></svg>
<span style="left:861.35px;top:735px;font-size:18.5px;line-height:18.5px;transform:scaleX(0.8720);">7,34</span>
<svg style="left:900px;top:737px;" width="16.2" height="16.2" viewBox="0 0 16.2 16.2"><rect x="0.9" y="0.9" width="14.4" height="14.4" fill="#fff" stroke="#77775f" stroke-width="1.7"/></svg>
<span style="left:999.35px;top:735px;font-size:18.5px;line-height:18.5px;transform:scaleX(0.8720);">8,14</span>
<svg style="left:1038px;top:737px;" width="16.2" height="16.2" viewBox="0 0 16.2 16.2"><rect x="0.9" y="0.9" width="14.4" height="14.4" fill="#fff" stroke="#77775f" stroke-width="1.7"/><path d="M3.7 7.8 L6.7 11 L12.3 4.7" stroke="#000" stroke-width="3" fill="none"/></svg>
<span style="left:1161.35px;top:735px;font-size:18.5px;line-height:18.5px;transform:scaleX(0.8720);">7,34</span>
<svg style="left:1200px;top:737px;" width="16.2" height="16.2" viewBox="0 0 16.2 16.2"><rect x="0.9" y="0.9" width="14.4" height="14.4" fill="#fff" stroke="#77775f" stroke-width="1.7"/></svg>
<div style="left:130.5px;top:761px;width:1336.5px;height:1px;background:#ececec;"></div>
<div style="left:93px;top:778.25px;width:13px;height:1.5px;background:repeating-linear-gradient(90deg,#8c8c8c 0 1.5px,transparent 1.5px 3px);"></div>
<svg style="left:112px;top:770px;" width="11" height="17" viewBox="0 0 11 17"><path d="M1.5 0 V15 H10.5" stroke="#e60012" stroke-width="3" fill="none"/></svg>
<span style="left:136.10px;top:768px;font-size:18.5px;line-height:18.5px;transform:scaleX(0.8974);">1.3.80</span>
<div style="left:193.5px;top:763px;width:277px;height:30px;overflow:hidden;">
<span style="left:1.13px;top:5px;font-size:18.5px;line-height:18.5px;transform:scaleX(0.8720);">Luftleitung 250</span>
</div>
<span style="left:553.99px;top:768px;font-size:18.5px;line-height:18.5px;transform:scaleX(0.8720);">32 m</span>
<span style="left:700.88px;top:768px;font-size:18.5px;line-height:18.5px;transform:scaleX(0.8720);">10,00</span>
<svg style="left:750px;top:771px;" width="14" height="14" viewBox="0 0 14 14"><polygon points="4.6,0 9.4,0 14,4.6 14,9.4 9.4,14 4.6,14 0,9.4 0,4.6" fill="#00e800"/></svg>
<span style="left:861.35px;top:768px;font-size:18.5px;line-height:18.5px;transform:scaleX(0.8720);">8,82</span>
<svg style="left:900px;top:770px;" width="16.2" height="16.2" viewBox="0 0 16.2 16.2"><rect x="0.9" y="0.9" width="14.4" height="14.4" fill="#fff" stroke="#77775f" stroke-width="1.7"/></svg>
<span style="left:999.35px;top:768px;font-size:18.5px;line-height:18.5px;transform:scaleX(0.8720);">9,82</span>
<svg style="left:1038px;top:770px;" width="16.2" height="16.2" viewBox="0 0 16.2 16.2"><rect x="0.9" y="0.9" width="14.4" height="14.4" fill="#fff" stroke="#77775f" stroke-width="1.7"/><path d="M3.7 7.8 L6.7 11 L12.3 4.7" stroke="#000" stroke-width="3" fill="none"/></svg>
<span style="left:1161.35px;top:768px;font-size:18.5px;line-height:18.5px;transform:scaleX(0.8720);">8,82</span>
<svg style="left:1200px;top:770px;" width="16.2" height="16.2" viewBox="0 0 16.2 16.2"><rect x="0.9" y="0.9" width="14.4" height="14.4" fill="#fff" stroke="#77775f" stroke-width="1.7"/></svg>
<div style="left:130.5px;top:794px;width:1336.5px;height:1px;background:#ececec;"></div>
<div style="left:93px;top:811.25px;width:13px;height:1.5px;background:repeating-linear-gradient(90deg,#8c8c8c 0 1.5px,transparent 1.5px 3px);"></div>
<svg style="left:112px;top:803px;" width="11" height="17" viewBox="0 0 11 17"><path d="M1.5 0 V15 H10.5" stroke="#e60012" stroke-width="3" fill="none"/></svg>
<span style="left:136.10px;top:801px;font-size:18.5px;line-height:18.5px;transform:scaleX(0.8974);">1.3.90</span>
<div style="left:193.5px;top:796px;width:277px;height:30px;overflow:hidden;">
<span style="left:1.13px;top:5px;font-size:18.5px;line-height:18.5px;transform:scaleX(0.8720);">Bogen bis 90°, 100</span>
</div>
<span style="left:551.95px;top:801px;font-size:18.5px;line-height:18.5px;transform:scaleX(0.8720);">20 St</span>
<span style="left:709.85px;top:801px;font-size:18.5px;line-height:18.5px;transform:scaleX(0.8720);">3,60</span>
<svg style="left:750px;top:804px;" width="14" height="14" viewBox="0 0 14 14"><polygon points="4.6,0 9.4,0 14,4.6 14,9.4 9.4,14 4.6,14 0,9.4 0,4.6" fill="#00e800"/></svg>
<span style="left:861.35px;top:801px;font-size:18.5px;line-height:18.5px;transform:scaleX(0.8720);">3,00</span>
<svg style="left:900px;top:803px;" width="16.2" height="16.2" viewBox="0 0 16.2 16.2"><rect x="0.9" y="0.9" width="14.4" height="14.4" fill="#fff" stroke="#77775f" stroke-width="1.7"/></svg>
<span style="left:999.55px;top:801px;font-size:18.5px;line-height:18.5px;transform:scaleX(0.8720);">3,11</span>
<svg style="left:1038px;top:803px;" width="16.2" height="16.2" viewBox="0 0 16.2 16.2"><rect x="0.9" y="0.9" width="14.4" height="14.4" fill="#fff" stroke="#77775f" stroke-width="1.7"/><path d="M3.7 7.8 L6.7 11 L12.3 4.7" stroke="#000" stroke-width="3" fill="none"/></svg>
<span style="left:1161.35px;top:801px;font-size:18.5px;line-height:18.5px;transform:scaleX(0.8720);">3,00</span>
<svg style="left:1200px;top:803px;" width="16.2" height="16.2" viewBox="0 0 16.2 16.2"><rect x="0.9" y="0.9" width="14.4" height="14.4" fill="#fff" stroke="#77775f" stroke-width="1.7"/></svg>
<div style="left:130.5px;top:827px;width:1336.5px;height:1px;background:#ececec;"></div>
<div style="left:93px;top:844.25px;width:13px;height:1.5px;background:repeating-linear-gradient(90deg,#8c8c8c 0 1.5px,transparent 1.5px 3px);"></div>
<svg style="left:112px;top:836px;" width="11" height="17" viewBox="0 0 11 17"><path d="M1.5 0 V15 H10.5" stroke="#e60012" stroke-width="3" fill="none"/></svg>
<span style="left:136.62px;top:834px;font-size:18.5px;line-height:18.5px;transform:scaleX(0.8770);">1.3.100</span>
<div style="left:201.75px;top:829px;width:268.75px;height:30px;overflow:hidden;">
<span style="left:1.13px;top:5px;font-size:18.5px;line-height:18.5px;transform:scaleX(0.8720);">Bogen bis 90°, 125</span>
</div>
<span style="left:551.95px;top:834px;font-size:18.5px;line-height:18.5px;transform:scaleX(0.8720);">10 St</span>
<span style="left:709.85px;top:834px;font-size:18.5px;line-height:18.5px;transform:scaleX(0.8720);">4,00</span>
<svg style="left:750px;top:837px;" width="14" height="14" viewBox="0 0 14 14"><polygon points="4.6,0 9.4,0 14,4.6 14,9.4 9.4,14 4.6,14 0,9.4 0,4.6" fill="#00e800"/></svg>
<span style="left:861.35px;top:834px;font-size:18.5px;line-height:18.5px;transform:scaleX(0.8720);">3,74</span>
<svg style="left:900px;top:836px;" width="16.2" height="16.2" viewBox="0 0 16.2 16.2"><rect x="0.9" y="0.9" width="14.4" height="14.4" fill="#fff" stroke="#77775f" stroke-width="1.7"/></svg>
<span style="left:998.35px;top:834px;font-size:18.5px;line-height:18.5px;transform:scaleX(0.8720);">3,81</span>
<svg style="left:1038px;top:836px;" width="16.2" height="16.2" viewBox="0 0 16.2 16.2"><rect x="0.9" y="0.9" width="14.4" height="14.4" fill="#fff" stroke="#77775f" stroke-width="1.7"/><path d="M3.7 7.8 L6.7 11 L12.3 4.7" stroke="#000" stroke-width="3" fill="none"/></svg>
<span style="left:1161.35px;top:834px;font-size:18.5px;line-height:18.5px;transform:scaleX(0.8720);">3,74</span>
<svg style="left:1200px;top:836px;" width="16.2" height="16.2" viewBox="0 0 16.2 16.2"><rect x="0.9" y="0.9" width="14.4" height="14.4" fill="#fff" stroke="#77775f" stroke-width="1.7"/></svg>
<div style="left:130.5px;top:860px;width:1336.5px;height:1px;background:#ececec;"></div>
<div style="left:93px;top:877.25px;width:13px;height:1.5px;background:repeating-linear-gradient(90deg,#8c8c8c 0 1.5px,transparent 1.5px 3px);"></div>
<svg style="left:112px;top:869px;" width="11" height="17" viewBox="0 0 11 17"><path d="M1.5 0 V15 H10.5" stroke="#e60012" stroke-width="3" fill="none"/></svg>
<span style="left:136.60px;top:867px;font-size:18.5px;line-height:18.5px;transform:scaleX(0.8974);">1.3.110</span>
<div style="left:201.75px;top:862px;width:268.75px;height:30px;overflow:hidden;">
<span style="left:1.13px;top:5px;font-size:18.5px;line-height:18.5px;transform:scaleX(0.8720);">Bogen bis 90°, 150</span>
</div>
<span style="left:560.93px;top:867px;font-size:18.5px;line-height:18.5px;transform:scaleX(0.8720);">7 St</span>
<span style="left:709.85px;top:867px;font-size:18.5px;line-height:18.5px;transform:scaleX(0.8720);">6,00</span>
<svg style="left:750px;top:870px;" width="14" height="14" viewBox="0 0 14 14"><polygon points="4.6,0 9.4,0 14,4.6 14,9.4 9.4,14 4.6,14 0,9.4 0,4.6" fill="#00e800"/></svg>
<span style="left:861.35px;top:867px;font-size:18.5px;line-height:18.5px;transform:scaleX(0.8720);">5,69</span>
<svg style="left:900px;top:869px;" width="16.2" height="16.2" viewBox="0 0 16.2 16.2"><rect x="0.9" y="0.9" width="14.4" height="14.4" fill="#fff" stroke="#77775f" stroke-width="1.7"/><path d="M3.7 7.8 L6.7 11 L12.3 4.7" stroke="#000" stroke-width="3" fill="none"/></svg>
<span style="left:999.35px;top:867px;font-size:18.5px;line-height:18.5px;transform:scaleX(0.8720);">5,69</span>
<svg style="left:1038px;top:869px;" width="16.2" height="16.2" viewBox="0 0 16.2 16.2"><rect x="0.9" y="0.9" width="14.4" height="14.4" fill="#fff" stroke="#77775f" stroke-width="1.7"/></svg>
<span style="left:1161.35px;top:867px;font-size:18.5px;line-height:18.5px;transform:scaleX(0.8720);">5,69</span>
<svg style="left:1200px;top:869px;" width="16.2" height="16.2" viewBox="0 0 16.2 16.2"><rect x="0.9" y="0.9" width="14.4" height="14.4" fill="#fff" stroke="#77775f" stroke-width="1.7"/></svg>
<div style="left:130.5px;top:893px;width:1336.5px;height:1px;background:#ececec;"></div>
<div style="left:93px;top:910.25px;width:13px;height:1.5px;background:repeating-linear-gradient(90deg,#8c8c8c 0 1.5px,transparent 1.5px 3px);"></div>
<svg style="left:112px;top:902px;" width="11" height="17" viewBox="0 0 11 17"><path d="M1.5 0 V15 H10.5" stroke="#e60012" stroke-width="3" fill="none"/></svg>
<span style="left:136.62px;top:900px;font-size:18.5px;line-height:18.5px;transform:scaleX(0.8770);">1.3.120</span>
<div style="left:201.75px;top:895px;width:268.75px;height:30px;overflow:hidden;">
<span style="left:1.13px;top:5px;font-size:18.5px;line-height:18.5px;transform:scaleX(0.8720);">Bogen bis 90°, 160</span>
</div>
<span style="left:560.93px;top:900px;font-size:18.5px;line-height:18.5px;transform:scaleX(0.8720);">2 St</span>
<span style="left:709.85px;top:900px;font-size:18.5px;line-height:18.5px;transform:scaleX(0.8720);">6,00</span>
<svg style="left:750px;top:903px;" width="14" height="14" viewBox="0 0 14 14"><polygon points="4.6,0 9.4,0 14,4.6 14,9.4 9.4,14 4.6,14 0,9.4 0,4.6" fill="#00e800"/></svg>
<span style="left:861.35px;top:900px;font-size:18.5px;line-height:18.5px;transform:scaleX(0.8720);">5,47</span>
<svg style="left:900px;top:902px;" width="16.2" height="16.2" viewBox="0 0 16.2 16.2"><rect x="0.9" y="0.9" width="14.4" height="14.4" fill="#fff" stroke="#77775f" stroke-width="1.7"/></svg>
<span style="left:999.35px;top:900px;font-size:18.5px;line-height:18.5px;transform:scaleX(0.8720);">5,66</span>
<svg style="left:1038px;top:902px;" width="16.2" height="16.2" viewBox="0 0 16.2 16.2"><rect x="0.9" y="0.9" width="14.4" height="14.4" fill="#fff" stroke="#77775f" stroke-width="1.7"/><path d="M3.7 7.8 L6.7 11 L12.3 4.7" stroke="#000" stroke-width="3" fill="none"/></svg>
<span style="left:1161.35px;top:900px;font-size:18.5px;line-height:18.5px;transform:scaleX(0.8720);">5,47</span>
<svg style="left:1200px;top:902px;" width="16.2" height="16.2" viewBox="0 0 16.2 16.2"><rect x="0.9" y="0.9" width="14.4" height="14.4" fill="#fff" stroke="#77775f" stroke-width="1.7"/></svg>
<div style="left:130.5px;top:926px;width:1336.5px;height:1px;background:#ececec;"></div>
<div style="left:93px;top:943.25px;width:13px;height:1.5px;background:repeating-linear-gradient(90deg,#8c8c8c 0 1.5px,transparent 1.5px 3px);"></div>
<svg style="left:112px;top:935px;" width="11" height="17" viewBox="0 0 11 17"><path d="M1.5 0 V15 H10.5" stroke="#e60012" stroke-width="3" fill="none"/></svg>
<span style="left:136.62px;top:933px;font-size:18.5px;line-height:18.5px;transform:scaleX(0.8770);">1.3.130</span>
<div style="left:201.75px;top:928px;width:268.75px;height:30px;overflow:hidden;">
<span style="left:1.13px;top:5px;font-size:18.5px;line-height:18.5px;transform:scaleX(0.8720);">Bogen bis 90°, 200</span>
</div>
<span style="left:560.93px;top:933px;font-size:18.5px;line-height:18.5px;transform:scaleX(0.8720);">9 St</span>
<span style="left:702.08px;top:933px;font-size:18.5px;line-height:18.5px;transform:scaleX(0.8720);">11,00</span>
<svg style="left:750px;top:936px;" width="14" height="14" viewBox="0 0 14 14"><polygon points="4.6,0 9.4,0 14,4.6 14,9.4 9.4,14 4.6,14 0,9.4 0,4.6" fill="#00e800"/></svg>
<span style="left:861.35px;top:933px;font-size:18.5px;line-height:18.5px;transform:scaleX(0.8720);">7,44</span>
<svg style="left:900px;top:935px;" width="16.2" height="16.2" viewBox="0 0 16.2 16.2"><rect x="0.9" y="0.9" width="14.4" height="14.4" fill="#fff" stroke="#77775f" stroke-width="1.7"/></svg>
<span style="left:999.35px;top:933px;font-size:18.5px;line-height:18.5px;transform:scaleX(0.8720);">8,07</span>
<svg style="left:1038px;top:935px;" width="16.2" height="16.2" viewBox="0 0 16.2 16.2"><rect x="0.9" y="0.9" width="14.4" height="14.4" fill="#fff" stroke="#77775f" stroke-width="1.7"/><path d="M3.7 7.8 L6.7 11 L12.3 4.7" stroke="#000" stroke-width="3" fill="none"/></svg>
<span style="left:1161.35px;top:933px;font-size:18.5px;line-height:18.5px;transform:scaleX(0.8720);">7,44</span>
<svg style="left:1200px;top:935px;" width="16.2" height="16.2" viewBox="0 0 16.2 16.2"><rect x="0.9" y="0.9" width="14.4" height="14.4" fill="#fff" stroke="#77775f" stroke-width="1.7"/></svg>
<div style="left:130.5px;top:959px;width:1336.5px;height:1px;background:#ececec;"></div>
<div style="left:93px;top:976.25px;width:13px;height:1.5px;background:repeating-linear-gradient(90deg,#8c8c8c 0 1.5px,transparent 1.5px 3px);"></div>
<svg style="left:112px;top:968px;" width="11" height="17" viewBox="0 0 11 17"><path d="M1.5 0 V15 H10.5" stroke="#e60012" stroke-width="3" fill="none"/></svg>
<span style="left:136.62px;top:966px;font-size:18.5px;line-height:18.5px;transform:scaleX(0.8770);">1.3.140</span>
<div style="left:201.75px;top:961px;width:268.75px;height:30px;overflow:hidden;">
<span style="left:1.13px;top:5px;font-size:18.5px;line-height:18.5px;transform:scaleX(0.8720);">Bogen bis 90°, 250</span>
</div>
<span style="left:560.93px;top:966px;font-size:18.5px;line-height:18.5px;transform:scaleX(0.8720);">2 St</span>
<span style="left:700.88px;top:966px;font-size:18.5px;line-height:18.5px;transform:scaleX(0.8720);">12,00</span>
<svg style="left:750px;top:969px;" width="14" height="14" viewBox="0 0 14 14"><polygon points="4.6,0 9.4,0 14,4.6 14,9.4 9.4,14 4.6,14 0,9.4 0,4.6" fill="#00e800"/></svg>
<span style="left:853.58px;top:966px;font-size:18.5px;line-height:18.5px;transform:scaleX(0.8720);">11,33</span>
<svg style="left:900px;top:968px;" width="16.2" height="16.2" viewBox="0 0 16.2 16.2"><rect x="0.9" y="0.9" width="14.4" height="14.4" fill="#fff" stroke="#77775f" stroke-width="1.7"/><path d="M3.7 7.8 L6.7 11 L12.3 4.7" stroke="#000" stroke-width="3" fill="none"/></svg>
<span style="left:991.58px;top:966px;font-size:18.5px;line-height:18.5px;transform:scaleX(0.8720);">11,33</span>
<svg style="left:1038px;top:968px;" width="16.2" height="16.2" viewBox="0 0 16.2 16.2"><rect x="0.9" y="0.9" width="14.4" height="14.4" fill="#fff" stroke="#77775f" stroke-width="1.7"/></svg>
<span style="left:1152.38px;top:966px;font-size:18.5px;line-height:18.5px;transform:scaleX(0.8720);">13,20</span>
<svg style="left:1200px;top:968px;" width="16.2" height="16.2" viewBox="0 0 16.2 16.2"><rect x="0.9" y="0.9" width="14.4" height="14.4" fill="#fff" stroke="#77775f" stroke-width="1.7"/></svg>
<div style="left:130.5px;top:992px;width:1336.5px;height:1px;background:#ececec;"></div>
<div style="left:93px;top:1009.25px;width:13px;height:1.5px;background:repeating-linear-gradient(90deg,#8c8c8c 0 1.5px,transparent 1.5px 3px);"></div>
<svg style="left:112px;top:1001px;" width="11" height="17" viewBox="0 0 11 17"><path d="M1.5 0 V15 H10.5" stroke="#e60012" stroke-width="3" fill="none"/></svg>
<span style="left:136.62px;top:999px;font-size:18.5px;line-height:18.5px;transform:scaleX(0.8770);">1.3.150</span>
<div style="left:201.75px;top:994px;width:268.75px;height:30px;overflow:hidden;">
<span style="left:2.00px;top:5px;font-size:18.5px;line-height:18.5px;transform:scaleX(0.8720);">Abzweigstück 90°, 125</span>
</div>
<span style="left:560.93px;top:999px;font-size:18.5px;line-height:18.5px;transform:scaleX(0.8720);">4 St</span>
<span style="left:709.85px;top:999px;font-size:18.5px;line-height:18.5px;transform:scaleX(0.8720);">5,00</span>
<svg style="left:750px;top:1002px;" width="14" height="14" viewBox="0 0 14 14"><polygon points="4.6,0 9.4,0 14,4.6 14,9.4 9.4,14 4.6,14 0,9.4 0,4.6" fill="#00e800"/></svg>
<span style="left:861.35px;top:999px;font-size:18.5px;line-height:18.5px;transform:scaleX(0.8720);">4,78</span>
<svg style="left:900px;top:1001px;" width="16.2" height="16.2" viewBox="0 0 16.2 16.2"><rect x="0.9" y="0.9" width="14.4" height="14.4" fill="#fff" stroke="#77775f" stroke-width="1.7"/></svg>
<span style="left:999.35px;top:999px;font-size:18.5px;line-height:18.5px;transform:scaleX(0.8720);">5,48</span>
<svg style="left:1038px;top:1001px;" width="16.2" height="16.2" viewBox="0 0 16.2 16.2"><rect x="0.9" y="0.9" width="14.4" height="14.4" fill="#fff" stroke="#77775f" stroke-width="1.7"/><path d="M3.7 7.8 L6.7 11 L12.3 4.7" stroke="#000" stroke-width="3" fill="none"/></svg>
<span style="left:1161.35px;top:999px;font-size:18.5px;line-height:18.5px;transform:scaleX(0.8720);">4,78</span>
<svg style="left:1200px;top:1001px;" width="16.2" height="16.2" viewBox="0 0 16.2 16.2"><rect x="0.9" y="0.9" width="14.4" height="14.4" fill="#fff" stroke="#77775f" stroke-width="1.7"/></svg>
<div style="left:130px;top:1025px;width:1066px;height:32px;background:#0078d7;"></div>
<div style="left:1196.5px;top:1025px;width:271px;height:32px;background:#3299d3;"></div>
<div style="left:470.25px;top:1025px;width:1.5px;height:32px;background:#9cc9ee;"></div>
<div style="left:592.25px;top:1025px;width:1.5px;height:32px;background:#9cc9ee;"></div>
<div style="left:743.75px;top:1025px;width:1.5px;height:32px;background:#9cc9ee;"></div>
<div style="left:895.25px;top:1025px;width:1.5px;height:32px;background:#9cc9ee;"></div>
<div style="left:1034.5px;top:1025px;width:161.5px;height:32px;background:transparent;border:1.2px solid #f3d9c9;"></div>
<div style="left:93px;top:1042.25px;width:13px;height:1.5px;background:repeating-linear-gradient(90deg,#8c8c8c 0 1.5px,transparent 1.5px 3px);"></div>
<svg style="left:112px;top:1034px;" width="11" height="17" viewBox="0 0 11 17"><path d="M1.5 0 V15 H10.5" stroke="#e60012" stroke-width="3" fill="none"/></svg>
<span style="left:136.62px;top:1032px;font-size:18.5px;line-height:18.5px;color:#fff;transform:scaleX(0.8770);">1.3.160</span>
<div style="left:201.75px;top:1027px;width:268.75px;height:30px;overflow:hidden;">
<span style="left:2.00px;top:5px;font-size:18.5px;line-height:18.5px;color:#fff;transform:scaleX(0.8720);">Abzweigstück 90°, 160</span>
</div>
<span style="left:560.93px;top:1032px;font-size:18.5px;line-height:18.5px;color:#fff;transform:scaleX(0.8720);">4 St</span>
<span style="left:709.85px;top:1032px;font-size:18.5px;line-height:18.5px;color:#fff;transform:scaleX(0.8720);">8,00</span>
<svg style="left:750px;top:1035px;" width="14" height="14" viewBox="0 0 14 14"><polygon points="4.6,0 9.4,0 14,4.6 14,9.4 9.4,14 4.6,14 0,9.4 0,4.6" fill="#00e800"/></svg>
<span style="left:861.35px;top:1032px;font-size:18.5px;line-height:18.5px;color:#fff;transform:scaleX(0.8720);">7,15</span>
<div style="left:898.4px;top:1032.4px;width:19.4px;height:19.4px;background:#e8f2fb;"></div>
<svg style="left:900px;top:1034px;" width="16.2" height="16.2" viewBox="0 0 16.2 16.2"><rect x="0.9" y="0.9" width="14.4" height="14.4" fill="#fff" stroke="#77775f" stroke-width="1.7"/></svg>
<span style="left:998.35px;top:1032px;font-size:18.5px;line-height:18.5px;color:#fff;transform:scaleX(0.8720);">8,31</span>
<div style="left:1036.4px;top:1032.4px;width:19.4px;height:19.4px;background:#e8f2fb;"></div>
<svg style="left:1038px;top:1034px;" width="16.2" height="16.2" viewBox="0 0 16.2 16.2"><rect x="0.9" y="0.9" width="14.4" height="14.4" fill="#fff" stroke="#77775f" stroke-width="1.7"/><path d="M3.7 7.8 L6.7 11 L12.3 4.7" stroke="#000" stroke-width="3" fill="none"/></svg>
<span style="left:1161.35px;top:1032px;font-size:18.5px;line-height:18.5px;color:#fff;transform:scaleX(0.8720);">7,15</span>
<div style="left:1198.4px;top:1032.4px;width:19.4px;height:19.4px;background:#e8f2fb;"></div>
<svg style="left:1200px;top:1034px;" width="16.2" height="16.2" viewBox="0 0 16.2 16.2"><rect x="0.9" y="0.9" width="14.4" height="14.4" fill="#fff" stroke="#77775f" stroke-width="1.7"/></svg>
<div style="left:130.5px;top:1058px;width:1336.5px;height:1px;background:#ececec;"></div>
<div style="left:93px;top:1075.25px;width:13px;height:1.5px;background:repeating-linear-gradient(90deg,#8c8c8c 0 1.5px,transparent 1.5px 3px);"></div>
<svg style="left:112px;top:1067px;" width="11" height="17" viewBox="0 0 11 17"><path d="M1.5 0 V15 H10.5" stroke="#e60012" stroke-width="3" fill="none"/></svg>
<span style="left:136.62px;top:1065px;font-size:18.5px;line-height:18.5px;transform:scaleX(0.8770);">1.3.170</span>
<div style="left:201.75px;top:1060px;width:268.75px;height:30px;overflow:hidden;">
<span style="left:2.00px;top:5px;font-size:18.5px;line-height:18.5px;transform:scaleX(0.8720);">Abzweigstück 90°, 200</span>
</div>
<span style="left:560.93px;top:1065px;font-size:18.5px;line-height:18.5px;transform:scaleX(0.8720);">3 St</span>
<span style="left:709.85px;top:1065px;font-size:18.5px;line-height:18.5px;transform:scaleX(0.8720);">9,50</span>
<svg style="left:750px;top:1068px;" width="14" height="14" viewBox="0 0 14 14"><polygon points="4.6,0 9.4,0 14,4.6 14,9.4 9.4,14 4.6,14 0,9.4 0,4.6" fill="#00e800"/></svg>
<span style="left:861.35px;top:1065px;font-size:18.5px;line-height:18.5px;transform:scaleX(0.8720);">8,95</span>
<svg style="left:900px;top:1067px;" width="16.2" height="16.2" viewBox="0 0 16.2 16.2"><rect x="0.9" y="0.9" width="14.4" height="14.4" fill="#fff" stroke="#77775f" stroke-width="1.7"/></svg>
<span style="left:990.38px;top:1065px;font-size:18.5px;line-height:18.5px;transform:scaleX(0.8720);">10,39</span>
<svg style="left:1038px;top:1067px;" width="16.2" height="16.2" viewBox="0 0 16.2 16.2"><rect x="0.9" y="0.9" width="14.4" height="14.4" fill="#fff" stroke="#77775f" stroke-width="1.7"/><path d="M3.7 7.8 L6.7 11 L12.3 4.7" stroke="#000" stroke-width="3" fill="none"/></svg>
<span style="left:1161.35px;top:1065px;font-size:18.5px;line-height:18.5px;transform:scaleX(0.8720);">8,95</span>
<svg style="left:1200px;top:1067px;" width="16.2" height="16.2" viewBox="0 0 16.2 16.2"><rect x="0.9" y="0.9" width="14.4" height="14.4" fill="#fff" stroke="#77775f" stroke-width="1.7"/></svg>
<div style="left:130.5px;top:1091px;width:1336.5px;height:1px;background:#ececec;"></div>
<div style="left:93px;top:1108.25px;width:13px;height:1.5px;background:repeating-linear-gradient(90deg,#8c8c8c 0 1.5px,transparent 1.5px 3px);"></div>
<svg style="left:112px;top:1100px;" width="11" height="17" viewBox="0 0 11 17"><path d="M1.5 0 V15 H10.5" stroke="#e60012" stroke-width="3" fill="none"/></svg>
<span style="left:136.62px;top:1098px;font-size:18.5px;line-height:18.5px;transform:scaleX(0.8770);">1.3.180</span>
<div style="left:201.75px;top:1093px;width:268.75px;height:30px;overflow:hidden;">
<span style="left:2.00px;top:5px;font-size:18.5px;line-height:18.5px;transform:scaleX(0.8720);">Abzweigstück 90°, 250</span>
</div>
<span style="left:560.93px;top:1098px;font-size:18.5px;line-height:18.5px;transform:scaleX(0.8720);">3 St</span>
<span style="left:700.88px;top:1098px;font-size:18.5px;line-height:18.5px;transform:scaleX(0.8720);">13,00</span>
<svg style="left:750px;top:1101px;" width="14" height="14" viewBox="0 0 14 14"><polygon points="4.6,0 9.4,0 14,4.6 14,9.4 9.4,14 4.6,14 0,9.4 0,4.6" fill="#00e800"/></svg>
<span style="left:852.38px;top:1098px;font-size:18.5px;line-height:18.5px;transform:scaleX(0.8720);">12,24</span>
<svg style="left:900px;top:1100px;" width="16.2" height="16.2" viewBox="0 0 16.2 16.2"><rect x="0.9" y="0.9" width="14.4" height="14.4" fill="#fff" stroke="#77775f" stroke-width="1.7"/></svg>
<span style="left:990.38px;top:1098px;font-size:18.5px;line-height:18.5px;transform:scaleX(0.8720);">13,97</span>
<svg style="left:1038px;top:1100px;" width="16.2" height="16.2" viewBox="0 0 16.2 16.2"><rect x="0.9" y="0.9" width="14.4" height="14.4" fill="#fff" stroke="#77775f" stroke-width="1.7"/><path d="M3.7 7.8 L6.7 11 L12.3 4.7" stroke="#000" stroke-width="3" fill="none"/></svg>
<span style="left:1152.38px;top:1098px;font-size:18.5px;line-height:18.5px;transform:scaleX(0.8720);">12,24</span>
<svg style="left:1200px;top:1100px;" width="16.2" height="16.2" viewBox="0 0 16.2 16.2"><rect x="0.9" y="0.9" width="14.4" height="14.4" fill="#fff" stroke="#77775f" stroke-width="1.7"/></svg>
<div style="left:130.5px;top:1125px;width:1336.5px;height:1px;background:#ececec;"></div>
<div style="left:93px;top:1141.25px;width:13px;height:1.5px;background:repeating-linear-gradient(90deg,#8c8c8c 0 1.5px,transparent 1.5px 3px);"></div>
<svg style="left:112px;top:1133px;" width="11" height="17" viewBox="0 0 11 17"><path d="M1.5 0 V15 H10.5" stroke="#e60012" stroke-width="3" fill="none"/></svg>
<span style="left:136.62px;top:1131px;font-size:18.5px;line-height:18.5px;transform:scaleX(0.8770);">1.3.190</span>
<div style="left:201.75px;top:1127px;width:268.75px;height:30px;overflow:hidden;">
<span style="left:1.13px;top:4px;font-size:18.5px;line-height:18.5px;transform:scaleX(0.8720);">Reduzierung 125</span>
</div>
<span style="left:560.93px;top:1131px;font-size:18.5px;line-height:18.5px;transform:scaleX(0.8720);">8 St</span>
<span style="left:709.85px;top:1131px;font-size:18.5px;line-height:18.5px;transform:scaleX(0.8720);">3,00</span>
<svg style="left:750px;top:1134px;" width="14" height="14" viewBox="0 0 14 14"><polygon points="4.6,0 9.4,0 14,4.6 14,9.4 9.4,14 4.6,14 0,9.4 0,4.6" fill="#00e800"/></svg>
<span style="left:861.35px;top:1131px;font-size:18.5px;line-height:18.5px;transform:scaleX(0.8720);">2,78</span>
<svg style="left:900px;top:1133px;" width="16.2" height="16.2" viewBox="0 0 16.2 16.2"><rect x="0.9" y="0.9" width="14.4" height="14.4" fill="#fff" stroke="#77775f" stroke-width="1.7"/></svg>
<span style="left:999.35px;top:1131px;font-size:18.5px;line-height:18.5px;transform:scaleX(0.8720);">3,09</span>
<svg style="left:1038px;top:1133px;" width="16.2" height="16.2" viewBox="0 0 16.2 16.2"><rect x="0.9" y="0.9" width="14.4" height="14.4" fill="#fff" stroke="#77775f" stroke-width="1.7"/><path d="M3.7 7.8 L6.7 11 L12.3 4.7" stroke="#000" stroke-width="3" fill="none"/></svg>
<span style="left:1161.35px;top:1131px;font-size:18.5px;line-height:18.5px;transform:scaleX(0.8720);">2,78</span>
<svg style="left:1200px;top:1133px;" width="16.2" height="16.2" viewBox="0 0 16.2 16.2"><rect x="0.9" y="0.9" width="14.4" height="14.4" fill="#fff" stroke="#77775f" stroke-width="1.7"/></svg>
<div style="left:130.5px;top:1158px;width:1336.5px;height:1px;background:#ececec;"></div>
<div style="left:93px;top:1174.25px;width:13px;height:1.5px;background:repeating-linear-gradient(90deg,#8c8c8c 0 1.5px,transparent 1.5px 3px);"></div>
<svg style="left:112px;top:1166px;" width="11" height="17" viewBox="0 0 11 17"><path d="M1.5 0 V15 H10.5" stroke="#e60012" stroke-width="3" fill="none"/></svg>
<span style="left:136.62px;top:1164px;font-size:18.5px;line-height:18.5px;transform:scaleX(0.8770);">1.3.200</span>
<div style="left:201.75px;top:1160px;width:268.75px;height:30px;overflow:hidden;">
<span style="left:1.13px;top:4px;font-size:18.5px;line-height:18.5px;transform:scaleX(0.8720);">Reduzierung 160</span>
</div>
<span style="left:560.93px;top:1164px;font-size:18.5px;line-height:18.5px;transform:scaleX(0.8720);">7 St</span>
<span style="left:709.85px;top:1164px;font-size:18.5px;line-height:18.5px;transform:scaleX(0.8720);">3,50</span>
<svg style="left:750px;top:1167px;" width="14" height="14" viewBox="0 0 14 14"><polygon points="4.6,0 9.4,0 14,4.6 14,9.4 9.4,14 4.6,14 0,9.4 0,4.6" fill="#00e800"/></svg>
<span style="left:861.35px;top:1164px;font-size:18.5px;line-height:18.5px;transform:scaleX(0.8720);">3,18</span>
<svg style="left:900px;top:1166px;" width="16.2" height="16.2" viewBox="0 0 16.2 16.2"><rect x="0.9" y="0.9" width="14.4" height="14.4" fill="#fff" stroke="#77775f" stroke-width="1.7"/><path d="M3.7 7.8 L6.7 11 L12.3 4.7" stroke="#000" stroke-width="3" fill="none"/></svg>
<span style="left:999.35px;top:1164px;font-size:18.5px;line-height:18.5px;transform:scaleX(0.8720);">3,18</span>
<svg style="left:1038px;top:1166px;" width="16.2" height="16.2" viewBox="0 0 16.2 16.2"><rect x="0.9" y="0.9" width="14.4" height="14.4" fill="#fff" stroke="#77775f" stroke-width="1.7"/></svg>
<span style="left:1161.35px;top:1164px;font-size:18.5px;line-height:18.5px;transform:scaleX(0.8720);">3,22</span>
<svg style="left:1200px;top:1166px;" width="16.2" height="16.2" viewBox="0 0 16.2 16.2"><rect x="0.9" y="0.9" width="14.4" height="14.4" fill="#fff" stroke="#77775f" stroke-width="1.7"/></svg>
<div style="left:130.5px;top:1191px;width:1336.5px;height:1px;background:#ececec;"></div>
<div style="left:93px;top:1207.25px;width:13px;height:1.5px;background:repeating-linear-gradient(90deg,#8c8c8c 0 1.5px,transparent 1.5px 3px);"></div>
<svg style="left:112px;top:1199px;" width="11" height="17" viewBox="0 0 11 17"><path d="M1.5 0 V15 H10.5" stroke="#e60012" stroke-width="3" fill="none"/></svg>
<span style="left:136.62px;top:1197px;font-size:18.5px;line-height:18.5px;transform:scaleX(0.8770);">1.3.210</span>
<div style="left:201.75px;top:1193px;width:268.75px;height:30px;overflow:hidden;">
<span style="left:1.13px;top:4px;font-size:18.5px;line-height:18.5px;transform:scaleX(0.8720);">Reduzierung 200</span>
</div>
<span style="left:560.93px;top:1197px;font-size:18.5px;line-height:18.5px;transform:scaleX(0.8720);">7 St</span>
<span style="left:709.85px;top:1197px;font-size:18.5px;line-height:18.5px;transform:scaleX(0.8720);">4,50</span>
<svg style="left:750px;top:1200px;" width="14" height="14" viewBox="0 0 14 14"><polygon points="4.6,0 9.4,0 14,4.6 14,9.4 9.4,14 4.6,14 0,9.4 0,4.6" fill="#00e800"/></svg>
<span style="left:861.35px;top:1197px;font-size:18.5px;line-height:18.5px;transform:scaleX(0.8720);">3,86</span>
<svg style="left:900px;top:1199px;" width="16.2" height="16.2" viewBox="0 0 16.2 16.2"><rect x="0.9" y="0.9" width="14.4" height="14.4" fill="#fff" stroke="#77775f" stroke-width="1.7"/></svg>
<span style="left:999.35px;top:1197px;font-size:18.5px;line-height:18.5px;transform:scaleX(0.8720);">4,10</span>
<svg style="left:1038px;top:1199px;" width="16.2" height="16.2" viewBox="0 0 16.2 16.2"><rect x="0.9" y="0.9" width="14.4" height="14.4" fill="#fff" stroke="#77775f" stroke-width="1.7"/><path d="M3.7 7.8 L6.7 11 L12.3 4.7" stroke="#000" stroke-width="3" fill="none"/></svg>
<span style="left:1161.35px;top:1197px;font-size:18.5px;line-height:18.5px;transform:scaleX(0.8720);">3,86</span>
<svg style="left:1200px;top:1199px;" width="16.2" height="16.2" viewBox="0 0 16.2 16.2"><rect x="0.9" y="0.9" width="14.4" height="14.4" fill="#fff" stroke="#77775f" stroke-width="1.7"/></svg>
</div>
<div style="left:12px;top:1217px;width:2285.5px;height:4.2px;background:#e2e2e2;"></div>
<div style="left:12px;top:1218px;width:2285.5px;height:2px;background:#cccccc;"></div>
<div style="left:12px;top:1223.6px;width:2285.5px;height:1.5px;background:#dedede;"></div>
<div style="left:12px;top:1227.2px;width:2285.5px;height:4.4px;background:#e2e2e2;"></div>
<div style="left:12px;top:1229.4px;width:2285.5px;height:2px;background:#cccccc;"></div>
<div style="left:1296px;top:1231.5px;width:1.5px;height:350px;background:#d6d6d6;"></div>
<div style="left:1299.2px;top:1231.5px;width:1.3px;height:350px;background:#dcdcdc;"></div>
<div style="left:1304px;top:1231.5px;width:1.4px;height:350px;background:#d6d6d6;"></div>
<div style="left:1306.5px;top:1231.5px;width:1.4px;height:350px;background:#dcdcdc;"></div>
<div style="left:18.5px;top:1248.5px;width:1271.5px;height:326.5px;background:transparent;border:1.5px solid #dfdfdf;"></div>
<div style="left:36px;top:1244px;width:99px;height:10px;background:#fff;"></div>
<span style="left:40.15px;top:1239px;font-size:18.5px;line-height:18.5px;transform:scaleX(0.8531);">Positionstext</span>
<div style="left:20.5px;top:1260.2px;width:1241.5px;height:312.3px;background:#fff;border:1.8px solid #747474;border-right-width:1.5px;border-bottom-width:1.5px;"></div>
<div style="left:1262px;top:1261px;width:25px;height:311px;background:#e8e8e8;"></div>
<div style="left:1261.5px;top:1261px;width:25.5px;height:24.5px;background:#fff;border:1.5px solid #d9d9d9;"></div>
<svg style="left:0;top:0" width="2310" height="1622"><polygon points="1268.75,1275.95 1279.75,1275.95 1274.25,1270.45" fill="#b8b8b8"/></svg>
<div style="left:1261.5px;top:1547.5px;width:25.5px;height:25px;background:#fff;border:1.5px solid #d9d9d9;"></div>
<svg style="left:0;top:0" width="2310" height="1622"><polygon points="1268.75,1557.3 1279.75,1557.3 1274.25,1562.8" fill="#b8b8b8"/></svg>
<span style="left:24.00px;top:1264px;font-size:18.5px;line-height:18.5px;transform:scaleX(0.8695);">Abzweigstück</span>
<span style="left:25.38px;top:1284px;font-size:18.5px;line-height:18.5px;transform:scaleX(0.8774);">wie vor, jedoch</span>
<span style="left:23.62px;top:1303px;font-size:18.5px;line-height:18.5px;transform:scaleX(0.8839);">Nennweite  160</span>
<div style="left:1314px;top:1267.5px;width:977px;height:306.5px;background:#fff;border:1.5px solid #dcdcdc;"></div>
<div style="left:1320px;top:1274px;width:965.5px;height:294.5px;background:#fff;border:1.5px solid #d0d0d0;"></div>
<div style="left:1317px;top:1238.5px;width:149.5px;height:31px;background:#fff;border:1.5px solid #dcdcdc;border-bottom:none;"></div>
<span style="left:1327.00px;top:1244px;font-size:18.5px;line-height:18.5px;transform:scaleX(0.8557);">ausgewähltes Feld</span>
<span style="left:1477.00px;top:1245px;font-size:18.5px;line-height:18.5px;transform:scaleX(0.8592);">ausgewählte Spalte</span>
<span style="left:1635.00px;top:1245px;font-size:18.5px;line-height:18.5px;transform:scaleX(0.8742);">Tabelle</span>
<div style="left:1320.5px;top:1274.5px;width:930px;height:54px;background:#e0e0ff;"></div>
<div style="left:1320.5px;top:1328px;width:480px;height:48px;background:#e0e0ff;"></div>
<div style="left:1320.5px;top:1376px;width:930px;height:42px;background:#e0e0ff;"></div>
<div style="left:1320.5px;top:1327.5px;width:930.5px;height:1.6px;background:#16161e;"></div>
<div style="left:1320.5px;top:1348.7px;width:480.5px;height:1.6px;background:#16161e;"></div>
<div style="left:1320.5px;top:1375.5px;width:930.5px;height:1.6px;background:#16161e;"></div>
<div style="left:1320.5px;top:1417.3px;width:930.5px;height:1.6px;background:#16161e;"></div>
<div style="left:1500px;top:1274.5px;width:1.6px;height:143.5px;background:#16161e;"></div>
<div style="left:1799.8px;top:1328px;width:1.6px;height:90px;background:#16161e;"></div>
<div style="left:1889.7px;top:1376px;width:1.6px;height:42px;background:#16161e;"></div>
<div style="left:1979.7px;top:1376px;width:1.6px;height:42px;background:#16161e;"></div>
<div style="left:2069.7px;top:1376px;width:1.6px;height:42px;background:#16161e;"></div>
<div style="left:2159.7px;top:1376px;width:1.6px;height:42px;background:#16161e;"></div>
<div style="left:2249.8px;top:1274.5px;width:1.6px;height:143.5px;background:#16161e;"></div>
<div style="left:1320.5px;top:1459.5px;width:930.5px;height:1.3px;background:#c6c6c6;"></div>
<div style="left:1500.15px;top:1418.5px;width:1.3px;height:41.5px;background:#c6c6c6;"></div>
<div style="left:1799.9px;top:1418.5px;width:1.3px;height:41.5px;background:#c6c6c6;"></div>
<div style="left:1889.9px;top:1418.5px;width:1.3px;height:41.5px;background:#c6c6c6;"></div>
<div style="left:1979.9px;top:1418.5px;width:1.3px;height:41.5px;background:#c6c6c6;"></div>
<div style="left:2069.9px;top:1418.5px;width:1.3px;height:41.5px;background:#c6c6c6;"></div>
<div style="left:2159.9px;top:1418.5px;width:1.3px;height:41.5px;background:#c6c6c6;"></div>
<div style="left:2249.9px;top:1418.5px;width:1.3px;height:41.5px;background:#c6c6c6;"></div>
<span style="left:1324.13px;top:1277px;font-size:18.5px;line-height:18.5px;transform:scaleX(0.8689);">LV-Position</span>
<span style="left:1504.88px;top:1277px;font-size:18.5px;line-height:18.5px;transform:scaleX(0.8747);">1.3.160 Abzweigstück 90°, 160</span>
<span style="left:1324.14px;top:1331px;font-size:18.5px;line-height:18.5px;transform:scaleX(0.8602);">Mat.-EK (aktuell)</span>
<span style="left:1505.75px;top:1331px;font-size:18.5px;line-height:18.5px;transform:scaleX(0.8486);">7,15 €</span>
<span style="left:1324.15px;top:1351px;font-size:18.5px;line-height:18.5px;transform:scaleX(0.8474);">Mat.-EK (GAEB)</span>
<span style="left:1505.75px;top:1351px;font-size:18.5px;line-height:18.5px;transform:scaleX(0.8486);">7,15 €</span>
<span style="left:1324.50px;top:1378px;font-size:18.5px;line-height:18.5px;transform:scaleX(0.8849);">Artikel</span>
<span style="left:1504.88px;top:1378px;font-size:18.5px;line-height:18.5px;transform:scaleX(0.8729);">Bezeichnung</span>
<span style="left:1846.44px;top:1379px;font-size:18.5px;line-height:18.5px;transform:scaleX(0.8720);">Netto</span>
<span style="left:1875.16px;top:1398px;font-size:18.5px;line-height:18.5px;transform:scaleX(0.8720);">€</span>
<span style="left:1924.93px;top:1379px;font-size:18.5px;line-height:18.5px;transform:scaleX(0.8720);">Menge</span>
<span style="left:1921.22px;top:1398px;font-size:18.5px;line-height:18.5px;transform:scaleX(0.8720);">gesamt</span>
<span style="left:2007.64px;top:1379px;font-size:18.5px;line-height:18.5px;transform:scaleX(0.8720);">Gesamt</span>
<span style="left:2054.41px;top:1398px;font-size:18.5px;line-height:18.5px;transform:scaleX(0.8720);">€</span>
<span style="left:2087.00px;top:1379px;font-size:18.5px;line-height:18.5px;transform:scaleX(0.8922);">Ansicht</span>
<span style="left:2086.15px;top:1398px;font-size:18.5px;line-height:18.5px;transform:scaleX(0.8477);">in OMD</span>
<span style="left:2178.00px;top:1379px;font-size:18.5px;line-height:18.5px;transform:scaleX(0.8674);">Ansicht</span>
<span style="left:2182.63px;top:1398px;font-size:18.5px;line-height:18.5px;transform:scaleX(0.8412);">in IDS</span>
<svg style="left:1322.5px;top:1430.5px;" width="16.5" height="16.5" viewBox="0 0 16.5 16.5"><rect x="0" y="0" width="16.5" height="16.5" fill="#fff"/><path d="M0.8 16 V0.8 H16" stroke="#8c8c8c" stroke-width="1.6" fill="none"/><path d="M2.4 14.5 V2.4 H14.5" stroke="#555" stroke-width="1.4" fill="none"/><path d="M16 0.8 V16 H0.8" stroke="#e6e6e6" stroke-width="1.2" fill="none"/><path d="M4 8 L7 11.5 L12.8 4.6" stroke="#000" stroke-width="2.6" fill="none"/></svg>
<span style="left:1344.50px;top:1431px;font-size:18.5px;line-height:18.5px;transform:scaleX(0.8859);">WFAD16016090</span>
<span style="left:1504.50px;top:1420px;font-size:18.5px;line-height:18.5px;transform:scaleX(0.8733);">Abzweigstueck Wickelfalz verzinkt</span>
<span style="left:1757.00px;top:1420px;font-size:18.5px;line-height:18.5px;font-weight:bold;transform:scaleX(0.8500);-webkit-text-stroke:0.6px #000;">¶</span>
<span style="left:1769.14px;top:1420px;font-size:18.5px;line-height:18.5px;transform:scaleX(0.8621);">DN</span>
<span style="left:1508.63px;top:1440px;font-size:18.5px;line-height:18.5px;transform:scaleX(0.8659);">160 x  160  90Grad m.Dichtung</span>
<span style="left:1853.60px;top:1421px;font-size:18.5px;line-height:18.5px;transform:scaleX(0.8720);">7,15</span>
<span style="left:1964.78px;top:1421px;font-size:18.5px;line-height:18.5px;transform:scaleX(0.8720);">4</span>
<span style="left:2023.88px;top:1421px;font-size:18.5px;line-height:18.5px;transform:scaleX(0.8720);">28,60</span>
<div style="left:12px;top:1582px;width:2285.5px;height:28.5px;background:#fafafa;"></div>
<div style="left:12px;top:1581.5px;width:2285.5px;height:1.4px;background:#dadada;"></div>
<span style="left:26.39px;top:1590px;font-size:17.5px;line-height:17.5px;color:#1a1a1a;transform:scaleX(1.0117);">Einkauf geändert</span>
<span style="left:197.30px;top:1590px;font-size:17.5px;line-height:17.5px;color:#1a1a1a;transform:scaleX(0.9881);">Tabelle geändert</span>
<span style="left:346.01px;top:1590px;font-size:17.5px;line-height:17.5px;color:#1a1a1a;transform:scaleX(0.9914);">Material-EKs und Fremdl</span>
<span style="left:542.00px;top:1590px;font-size:17.5px;line-height:17.5px;color:#1a1a1a;">Angebot 00431-24</span>
<span style="left:905.03px;top:1590px;font-size:17.5px;line-height:17.5px;color:#1a1a1a;transform:scaleX(0.9687);">Neue Spalten: [F3] Frei, [F4] UGL, [F5] CSV, [F6] GAEB, [F7] Stamm</span>
<div style="left:175.4px;top:1589px;width:1.3px;height:18px;background:#d9d9d9;"></div>
<div style="left:340.4px;top:1589px;width:1.3px;height:18px;background:#d9d9d9;"></div>
<div style="left:537.4px;top:1589px;width:1.3px;height:18px;background:#d9d9d9;"></div>
<div style="left:894.4px;top:1589px;width:1.3px;height:18px;background:#d9d9d9;"></div>
<svg style="left:2278px;top:1596px;" width="14" height="14" viewBox="0 0 14 14"><rect x="10" y="2" width="2" height="2" fill="#bdbdbd"/><rect x="6" y="6" width="2" height="2" fill="#bdbdbd"/><rect x="10" y="6" width="2" height="2" fill="#bdbdbd"/><rect x="2" y="10" width="2" height="2" fill="#bdbdbd"/><rect x="6" y="10" width="2" height="2" fill="#bdbdbd"/><rect x="10" y="10" width="2" height="2" fill="#bdbdbd"/></svg>
<div style="left:1152px;top:316.5px;width:455.5px;height:449px;background:#f2f2f2;border:1.4px solid #a6a6a6;box-shadow:2px 2px 3px rgba(0,0,0,0.18);"></div>
<div style="left:1154px;top:318px;width:44.5px;height:446px;background:#f0f0f0;"></div>
<div style="left:1157px;top:321px;width:442px;height:32.5px;background:#91c9f7;"></div>
<svg style="left:1161px;top:325px;" width="24" height="24" viewBox="0 0 24 24"><rect x="8.9" y="0" width="6.2" height="24" fill="#76b82a"/><rect x="0" y="8.9" width="24" height="6.2" fill="#76b82a"/></svg>
<span style="left:1202.76px;top:329px;font-size:17.5px;line-height:17.5px;color:#111;transform:scaleX(0.9912);">Neue Spalte</span>
<svg style="left:1586.5px;top:329.5px;" width="7" height="11" viewBox="0 0 7 11"><polygon points="0.5,0.5 6.5,5.5 0.5,10.5" fill="#fff"/></svg>
<svg style="left:1161px;top:356px;" width="25" height="27" viewBox="0 0 25 27"><rect x="1.5" y="1.5" width="5.5" height="4.5" fill="#0f4570"/><rect x="1.5" y="9" width="5.5" height="15.5" fill="#0f4570"/><rect x="9.5" y="1.5" width="14.5" height="3" fill="#0f4570"/><rect x="12" y="7.5" width="9" height="2.8" fill="#0f4570"/><rect x="12" y="12.5" width="10" height="2.8" fill="#0f4570"/><rect x="12" y="17.5" width="9" height="2.8" fill="#0f4570"/><rect x="9.5" y="22.8" width="14.5" height="3" fill="#0f4570"/></svg>
<span style="left:1203.75px;top:362px;font-size:17.5px;line-height:17.5px;color:#111;transform:scaleX(1.0088);">Günstigste Kombination aller Preisspalten</span>
<div style="left:1200px;top:389.2px;width:404px;height:1.4px;background:#d9d9d9;"></div>
<div style="left:1200px;top:390.6px;width:404px;height:1.2px;background:#fbfbfb;"></div>
<div style="left:1162px;top:404.5px;width:22px;height:3px;background:#0f4570;"></div>
<div style="left:1162px;top:411px;width:22px;height:3px;background:#0f4570;"></div>
<div style="left:1162px;top:417.5px;width:22px;height:3px;background:#0f4570;"></div>
<span style="left:1203.75px;top:404px;font-size:17.5px;line-height:17.5px;color:#111;transform:scaleX(1.0188);">Änderung Mat.-EK über Auswahl</span>
<svg style="left:1160.5px;top:432.5px;" width="25" height="25" viewBox="0 0 25 25"><polygon points="7.7,1.8 17.3,1.8 23.2,7.7 23.2,17.3 17.3,23.2 7.7,23.2 1.8,17.3 1.8,7.7" fill="#fbfbfb" stroke="#b4b4b4" stroke-width="3.6"/><path d="M5.5 6 L19.5 19" stroke="#b4b4b4" stroke-width="3.6"/></svg>
<span style="left:1202.74px;top:437px;font-size:17.5px;line-height:17.5px;color:#a2a2a2;transform:scaleX(1.0139);">Rückgängig letzte Änderung Mat.-EK</span>
<svg style="left:1160.5px;top:466px;" width="25" height="25" viewBox="0 0 25 25"><path d="M3 3 L22 22 M22 3 L3 22" stroke="#ee1c23" stroke-width="6.2" fill="none"/></svg>
<span style="left:1202.71px;top:470px;font-size:17.5px;line-height:17.5px;color:#111;transform:scaleX(1.0403);">Markierung entfernen</span>
<div style="left:1200px;top:496.7px;width:404px;height:1.4px;background:#d9d9d9;"></div>
<div style="left:1200px;top:498.1px;width:404px;height:1.2px;background:#fbfbfb;"></div>
<span style="left:1203.75px;top:512px;font-size:17.5px;line-height:17.5px;color:#111;transform:scaleX(1.0047);">Standard - Spaltenbreiten herstellen</span>
<span style="left:1203.75px;top:545px;font-size:17.5px;line-height:17.5px;color:#111;transform:scaleX(0.9937);">Alles ausklappen</span>
<span style="left:1203.75px;top:578px;font-size:17.5px;line-height:17.5px;color:#111;transform:scaleX(1.0042);">Alles einklappen</span>
<div style="left:1200px;top:605.2px;width:404px;height:1.4px;background:#d9d9d9;"></div>
<div style="left:1200px;top:606.6px;width:404px;height:1.2px;background:#fbfbfb;"></div>
<div style="left:1162.5px;top:624.5px;width:21.5px;height:7.2px;background:#ee1c23;"></div>
<span style="left:1203.75px;top:619px;font-size:17.5px;line-height:17.5px;color:#111;transform:scaleX(0.9891);">alle Preisspalten löschen</span>
<div style="left:1200px;top:647.2px;width:404px;height:1.4px;background:#d9d9d9;"></div>
<div style="left:1200px;top:648.6px;width:404px;height:1.2px;background:#fbfbfb;"></div>
<svg style="left:1160.5px;top:657px;" width="25" height="28" viewBox="0 0 25 28"><path d="M5.5 12 V2 H19.5 V12" fill="#fff" stroke="#0f4570" stroke-width="2.8"/><rect x="0.5" y="12" width="24" height="9.5" fill="#0f4570"/><path d="M2 21 V26.3 H23 V21" fill="#fff" stroke="#0f4570" stroke-width="2.8"/></svg>
<span style="left:1202.73px;top:661px;font-size:17.5px;line-height:17.5px;color:#111;transform:scaleX(1.0169);">Drucken</span>
<div style="left:1200px;top:689.2px;width:404px;height:1.4px;background:#d9d9d9;"></div>
<div style="left:1200px;top:690.6px;width:404px;height:1.2px;background:#fbfbfb;"></div>
<span style="left:1202.75px;top:704px;font-size:17.5px;line-height:17.5px;color:#111;">Bestellung(en) erstellen ...</span>
<span style="left:1202.77px;top:737px;font-size:17.5px;line-height:17.5px;color:#111;transform:scaleX(0.9823);">Preisanfrage erstellen ...</span>
<div style="left:1599px;top:316px;width:488px;height:299.5px;background:#f2f2f2;border:1.4px solid #a6a6a6;box-shadow:2px 2px 3px rgba(0,0,0,0.18);"></div>
<div style="left:1601px;top:317.5px;width:44.5px;height:296.5px;background:#f0f0f0;"></div>
<div style="left:1603.75px;top:396px;width:478.75px;height:32px;background:#91c9f7;"></div>
<svg style="left:1607px;top:322.5px;" width="24" height="24" viewBox="0 0 24 24"><path d="M0.5 9 H12 V1.5 L23.5 12 L12 22.5 V15 H0.5 Z" fill="#f5821f"/></svg>
<span style="left:1650.50px;top:329px;font-size:17.5px;line-height:17.5px;color:#111;transform:scaleX(0.9820);">freie Preisspalte</span>
<span style="left:2032.76px;top:329px;font-size:17.5px;line-height:17.5px;color:#111;transform:scaleX(0.8882);">F3</span>
<span style="left:1650.50px;top:362px;font-size:17.5px;line-height:17.5px;color:#111;transform:scaleX(1.0209);">Anfragespalte</span>
<span style="left:1965.24px;top:362px;font-size:17.5px;line-height:17.5px;color:#111;transform:scaleX(1.0077);">Umsch+F3</span>
<div style="left:1647.5px;top:389.2px;width:435px;height:1.4px;background:#d9d9d9;"></div>
<div style="left:1647.5px;top:390.6px;width:435px;height:1.2px;background:#fbfbfb;"></div>
<svg style="left:1608px;top:400px;" width="24" height="24" viewBox="0 0 24 24"><rect x="8.9" y="0" width="6.2" height="24" fill="#76b82a"/><rect x="0" y="8.9" width="24" height="6.2" fill="#76b82a"/></svg>
<span style="left:1649.53px;top:404px;font-size:17.5px;line-height:17.5px;color:#111;transform:scaleX(0.9744);">Preisspalte aus UGL - Datei</span>
<span style="left:2032.81px;top:404px;font-size:17.5px;line-height:17.5px;color:#111;transform:scaleX(0.8431);">F4</span>
<svg style="left:1608px;top:433px;" width="24" height="24" viewBox="0 0 24 24"><rect x="8.9" y="0" width="6.2" height="24" fill="#76b82a"/><rect x="0" y="8.9" width="24" height="6.2" fill="#76b82a"/></svg>
<span style="left:1649.53px;top:437px;font-size:17.5px;line-height:17.5px;color:#111;transform:scaleX(0.9651);">Preisspalte aus CSV - Datei</span>
<span style="left:2032.76px;top:437px;font-size:17.5px;line-height:17.5px;color:#111;transform:scaleX(0.8882);">F5</span>
<svg style="left:1608px;top:466px;" width="24" height="24" viewBox="0 0 24 24"><rect x="8.9" y="0" width="6.2" height="24" fill="#76b82a"/><rect x="0" y="8.9" width="24" height="6.2" fill="#76b82a"/></svg>
<span style="left:1649.53px;top:470px;font-size:17.5px;line-height:17.5px;color:#111;transform:scaleX(0.9664);">Preisspalte aus GAEB - Datei</span>
<span style="left:2032.76px;top:470px;font-size:17.5px;line-height:17.5px;color:#111;transform:scaleX(0.8882);">F6</span>
<span style="left:1649.52px;top:503px;font-size:17.5px;line-height:17.5px;color:#111;transform:scaleX(0.9761);">Preisspalte aus GAEB-Preisangebot</span>
<span style="left:1965.24px;top:503px;font-size:17.5px;line-height:17.5px;color:#111;transform:scaleX(1.0077);">Umsch+F6</span>
<div style="left:1647.5px;top:530.2px;width:435px;height:1.4px;background:#d9d9d9;"></div>
<div style="left:1647.5px;top:531.6px;width:435px;height:1.2px;background:#fbfbfb;"></div>
<svg style="left:1607px;top:540px;" width="26" height="24" viewBox="0 0 26 24"><text x="13" y="21" font-size="26.5" font-weight="bold" text-anchor="middle" fill="#0f4570" stroke="#0f4570" stroke-width="1.1" textLength="21" lengthAdjust="spacingAndGlyphs">M</text></svg>
<span style="left:1649.49px;top:545px;font-size:17.5px;line-height:17.5px;color:#111;transform:scaleX(1.0064);">Preisspalte aus Material-Stamm</span>
<span style="left:2032.76px;top:545px;font-size:17.5px;line-height:17.5px;color:#111;transform:scaleX(0.8882);">F7</span>
<div style="left:1647.5px;top:572.2px;width:435px;height:1.4px;background:#d9d9d9;"></div>
<div style="left:1647.5px;top:573.6px;width:435px;height:1.2px;background:#fbfbfb;"></div>
<span style="left:1649.50px;top:587px;font-size:17.5px;line-height:17.5px;color:#111;transform:scaleX(1.0046);">Preisspalten für alle Lieferanten</span>
<span style="left:2032.76px;top:587px;font-size:17.5px;line-height:17.5px;color:#111;transform:scaleX(0.8882);">F8</span>
</div></body></html>
